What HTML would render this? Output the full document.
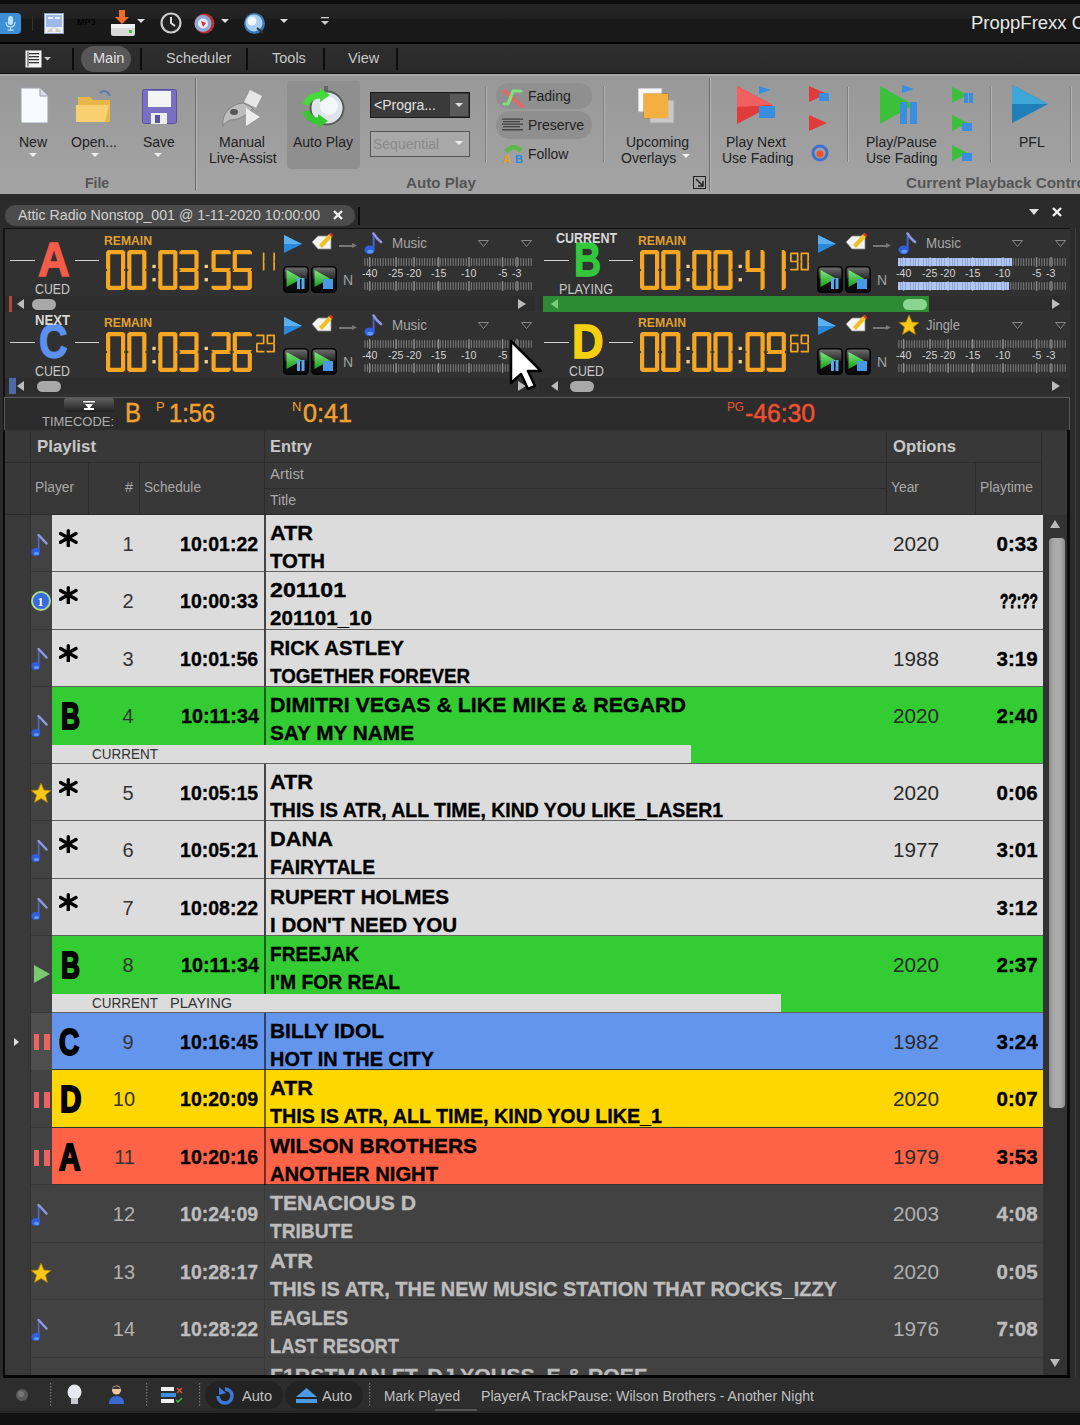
<!DOCTYPE html>
<html><head><meta charset="utf-8"><title>ProppFrexx</title><style>*{margin:0;padding:0;box-sizing:border-box}
html,body{width:1080px;height:1425px;overflow:hidden}
body{background:#2b2b2b;font-family:"Liberation Sans",sans-serif;position:relative}
.a{position:absolute;display:block}
.t{position:absolute;white-space:nowrap;line-height:1}
</style></head><body>
<svg width="0" height="0" style="position:absolute"><defs><linearGradient id="btng" x1="0" y1="0" x2="0" y2="1"><stop offset="0" stop-color="#707070"/><stop offset="0.45" stop-color="#2a2a2a"/><stop offset="0.5" stop-color="#111"/><stop offset="1" stop-color="#0a0a0a"/></linearGradient><linearGradient id="grng" x1="0" y1="0" x2="0" y2="1"><stop offset="0" stop-color="#7ee87e"/><stop offset="1" stop-color="#1a9a1a"/></linearGradient></defs></svg><div class="a" style="left:0px;top:0px;width:1080px;height:43px;background:linear-gradient(#0e0e0e 0,#0e0e0e 4px,#252525 4px,#222222 18px,#1a1a1a 19px,#191919 100%);"></div>
<div class="a" style="left:0px;top:41.5px;width:1080px;height:2px;background:#030303;"></div>
<div class="t" style="left:971.00px;top:14.0px;font-size:18.5px;color:#e8e8e8;">ProppFrexx O</div>
<div class="a" style="left:0px;top:13px;width:21px;height:21px;background:#3d8fd6;border-radius:0 4px 4px 0"></div>
<svg class="a" style="left:5px;top:16px;" width="11" height="15" viewBox="0 0 11 15"><rect x="3" y="0" width="5" height="9" rx="2.5" fill="#bfe0ff"/><path d="M1 6 Q1 11 5.5 11 Q10 11 10 6" stroke="#bfe0ff" stroke-width="1.2" fill="none"/><rect x="5" y="11" width="1.2" height="3" fill="#bfe0ff"/><rect x="2.5" y="13.5" width="6" height="1.2" fill="#bfe0ff"/></svg>
<div class="a" style="left:32px;top:16px;width:1px;height:15px;background:#333;"></div>
<svg class="a" style="left:44px;top:13px;" width="20" height="21" viewBox="0 0 20 21"><rect x="0.5" y="0.5" width="19" height="20" fill="#e8eef8" stroke="#8f9fbf"/><rect x="2" y="2" width="16" height="12" fill="#9fb8e8"/><rect x="4" y="4" width="5" height="2" fill="#eef"/><rect x="11" y="4" width="5" height="2" fill="#eef"/><path d="M3 19 Q10 10 17 19" fill="#c8d0c0"/><circle cx="10" cy="17" r="2" fill="#f0f0f0"/></svg>
<div class="t" style="left:77.00px;top:17.6px;font-size:9px;color:#050505;font-weight:bold;">MP3</div>
<svg class="a" style="left:110px;top:10px;" width="28" height="27" viewBox="0 0 28 27"><path d="M9 0 h6 v7 h4 l-7 7 l-7 -7 h4z" fill="#f06a2a"/><rect x="1" y="14" width="24" height="12" rx="2" fill="#d8d8d8"/><rect x="1" y="14" width="24" height="4" fill="#f0f0f0"/><rect x="19" y="20" width="3" height="3" fill="#3c3"/></svg>
<svg class="a" style="left:137px;top:19px;" width="8" height="5" viewBox="0 0 8 5"><path d="M0 0h8l-4 4z" fill="#ddd"/></svg>
<svg class="a" style="left:160px;top:12px;" width="22" height="22" viewBox="0 0 22 22"><circle cx="11" cy="11" r="9.5" fill="#222" stroke="#ccc" stroke-width="2.2"/><path d="M11 5v6l4 3" stroke="#ddd" stroke-width="2" fill="none"/></svg>
<svg class="a" style="left:193px;top:12px;" width="24" height="23" viewBox="0 0 24 23"><circle cx="11.5" cy="11.5" r="10" fill="#c03030"/><circle cx="10" cy="11.5" r="8.5" fill="#8fa8d8"/><circle cx="10" cy="11.5" r="5" fill="#e8eef8"/><path d="M8 9 l5 2 l-3 4z" fill="#c33"/></svg>
<svg class="a" style="left:221px;top:19px;" width="8" height="5" viewBox="0 0 8 5"><path d="M0 0h8l-4 4z" fill="#ddd"/></svg>
<svg class="a" style="left:243px;top:12px;" width="23" height="23" viewBox="0 0 23 23"><circle cx="11.5" cy="11.5" r="10.5" fill="#3a78b8"/><circle cx="11" cy="11" r="8.5" fill="#a8cff0"/><circle cx="9" cy="9" r="4.5" fill="#eef6ff"/><path d="M14 16 l6 5" stroke="#333" stroke-width="2"/></svg>
<svg class="a" style="left:280px;top:19px;" width="8" height="5" viewBox="0 0 8 5"><path d="M0 0h8l-4 4z" fill="#ddd"/></svg>
<svg class="a" style="left:321px;top:17px;" width="8" height="9" viewBox="0 0 8 9"><rect x="0" y="0" width="8" height="1.3" fill="#ccc"/><path d="M0 4h8l-4 4z" fill="#ccc"/></svg>
<div class="a" style="left:0px;top:43.5px;width:1080px;height:30px;background:linear-gradient(#2e2e2e,#2a2a2a);"></div>
<div class="a" style="left:0px;top:73px;width:1080px;height:1.2px;background:#0a0a0a;"></div>
<svg class="a" style="left:25px;top:50px;" width="17" height="18" viewBox="0 0 17 18"><rect x="0.5" y="0.5" width="16" height="17" fill="#f4f4f4"/><rect x="4" y="3" width="10" height="1.3" fill="#333"/><rect x="4" y="6" width="10" height="1.3" fill="#333"/><rect x="4" y="9" width="10" height="1.3" fill="#333"/><rect x="4" y="12" width="10" height="1.3" fill="#333"/><rect x="2.5" y="1.5" width="1" height="15" fill="#333"/></svg>
<svg class="a" style="left:44px;top:57px;" width="7" height="4" viewBox="0 0 7 4"><path d="M0 0h7l-3.5 3.5z" fill="#ccc"/></svg>
<div class="a" style="left:72px;top:48px;width:2px;height:22px;background:#0c0c0c;"></div>
<div class="a" style="left:140px;top:48px;width:2px;height:22px;background:#0c0c0c;"></div>
<div class="a" style="left:246px;top:48px;width:2px;height:22px;background:#0c0c0c;"></div>
<div class="a" style="left:323px;top:48px;width:2px;height:22px;background:#0c0c0c;"></div>
<div class="a" style="left:396px;top:48px;width:2px;height:22px;background:#0c0c0c;"></div>
<div class="a" style="left:81px;top:46px;width:50px;height:26px;background:#575757;border-radius:13px"></div>
<div class="t" style="left:93.00px;top:50.7px;font-size:14.5px;color:#e0e0e0;">Main</div>
<div class="t" style="left:166.00px;top:50.7px;font-size:14.5px;color:#c8c8c8;">Scheduler</div>
<div class="t" style="left:272.00px;top:50.7px;font-size:14.5px;color:#c8c8c8;">Tools</div>
<div class="t" style="left:348.00px;top:50.7px;font-size:14.5px;color:#c8c8c8;">View</div>
<div class="a" style="left:0px;top:74px;width:1080px;height:120px;background:linear-gradient(#aeaeae 0,#aeaeae 1px,#989898 2.5px,#9c9c9c 35%,#a4a4a4 100%);"></div>
<div class="a" style="left:0px;top:194px;width:1080px;height:4px;background:#2b2b2b;"></div>
<div class="a" style="left:195px;top:78px;width:1px;height:113px;background:#6e6e6e;box-shadow:1px 0 0 #b4b4b4"></div>
<div class="a" style="left:709px;top:78px;width:1px;height:113px;background:#6e6e6e;box-shadow:1px 0 0 #b4b4b4"></div>
<div class="a" style="left:485px;top:87px;width:1px;height:75px;background:#7e7e7e;box-shadow:1px 0 0 #b4b4b4"></div>
<div class="a" style="left:603px;top:87px;width:1px;height:75px;background:#7e7e7e;box-shadow:1px 0 0 #b4b4b4"></div>
<div class="a" style="left:847px;top:87px;width:1px;height:75px;background:#7e7e7e;box-shadow:1px 0 0 #b4b4b4"></div>
<div class="a" style="left:990px;top:87px;width:1px;height:75px;background:#7e7e7e;box-shadow:1px 0 0 #b4b4b4"></div>
<div class="a" style="left:1070px;top:87px;width:1px;height:75px;background:#7e7e7e;box-shadow:1px 0 0 #b4b4b4"></div>
<svg class="a" style="left:20px;top:87px;" width="29" height="37" viewBox="0 0 29 37"><path d="M1 1h19l8 8v27h-27z" fill="#f8f8ff" stroke="#9aa0b0"/><path d="M20 1v8h8" fill="#dde" stroke="#9aa0b0"/></svg>
<div class="t" style="left:19.00px;top:134.8px;font-size:14px;color:#222;">New</div>
<svg class="a" style="left:29px;top:153px;" width="8" height="5" viewBox="0 0 8 5"><path d="M0 0h8l-4 4z" fill="#eee"/></svg>
<svg class="a" style="left:76px;top:89px;" width="38" height="35" viewBox="0 0 38 35"><path d="M2 8h12l3 3h17v22h-32z" fill="#e6b84a"/><path d="M0 16h33l-4 17h-29z" fill="#f8d070"/><path d="M24 4 q6 -5 10 3" stroke="#5a7ab0" stroke-width="2" fill="none"/></svg>
<div class="t" style="left:71.00px;top:134.8px;font-size:14px;color:#222;">Open...</div>
<svg class="a" style="left:91px;top:153px;" width="8" height="5" viewBox="0 0 8 5"><path d="M0 0h8l-4 4z" fill="#eee"/></svg>
<svg class="a" style="left:142px;top:89px;" width="35" height="35" viewBox="0 0 35 35"><rect x="0.5" y="0.5" width="34" height="34" rx="2" fill="#7a6fc0" stroke="#5a50a0"/><rect x="6" y="2" width="23" height="16" fill="#f4f4f4"/><rect x="9" y="24" width="16" height="11" fill="#ececec"/><rect x="13" y="26" width="5" height="8" fill="#5a50a0"/></svg>
<div class="t" style="left:143.00px;top:134.8px;font-size:14px;color:#222;">Save</div>
<svg class="a" style="left:154px;top:153px;" width="8" height="5" viewBox="0 0 8 5"><path d="M0 0h8l-4 4z" fill="#eee"/></svg>
<div class="t" style="left:85.00px;top:175.8px;font-size:14px;color:#555;font-weight:bold;">File</div>
<svg class="a" style="left:220px;top:86px;" width="44" height="42" viewBox="0 0 44 42"><path d="M30 4 L42 10 L36 22 L24 16z" fill="#e6e6e6"/><path d="M23 17 L33 22 L28 27 Q20 34 10 34 Q5 36 3 40 Q2 30 8 24 Q14 18 23 17z" fill="#bdbdbd" stroke="#7a7a7a" stroke-width="0.8"/><ellipse cx="14" cy="26" rx="4" ry="3" fill="#555"/><path d="M26 22 L40 31 L26 40z" fill="#ececec"/></svg>
<div class="t" style="left:219.00px;top:134.8px;font-size:14px;color:#222;">Manual</div>
<div class="t" style="left:209.00px;top:150.8px;font-size:14px;color:#222;">Live-Assist</div>
<div class="a" style="left:287px;top:81px;width:73px;height:88px;background:#8f8f8f;border-radius:4px"></div>
<svg class="a" style="left:300px;top:84px;" width="46" height="46" viewBox="0 0 46 46"><rect x="24" y="2" width="4" height="5" fill="#666"/><circle cx="27" cy="24" r="16.5" fill="#dfe3ea" stroke="#5a5a5a" stroke-width="2"/><circle cx="29" cy="22" r="9" fill="#f4f6fa"/><path d="M6 21 Q9 11 22 11" stroke="#44d83a" stroke-width="6.5" fill="none"/><path d="M20 4 l10 7 l-10 7z" fill="#44d83a"/><path d="M6 27 Q9 37 20 37" stroke="#36c82e" stroke-width="6.5" fill="none"/><path d="M18 30 l10 7 l-10 7z" fill="#36c82e"/></svg>
<div class="t" style="left:293.00px;top:134.8px;font-size:14px;color:#222;">Auto Play</div>
<div class="a" style="left:370px;top:92px;width:100px;height:26px;background:#3a3a3a;border:1px solid #1a1a1a"></div>
<div class="a" style="left:450px;top:94px;width:18px;height:22px;background:#5a5a5a;"></div>
<svg class="a" style="left:455px;top:103px;" width="8" height="5" viewBox="0 0 8 5"><path d="M0 0h8l-4 4z" fill="#ddd"/></svg>
<div class="t" style="left:374.00px;top:97.8px;font-size:14px;color:#e0e0e0;">&lt;Progra...</div>
<div class="a" style="left:370px;top:131px;width:100px;height:26px;background:#a9a9a9;border:1px solid #555"></div>
<svg class="a" style="left:455px;top:141px;" width="8" height="5" viewBox="0 0 8 5"><path d="M0 0h8l-4 4z" fill="#eee"/></svg>
<div class="t" style="left:373.00px;top:136.8px;font-size:14px;color:#8a8a8a;">Sequential</div>
<div class="t" style="left:406.00px;top:175.8px;font-size:14px;color:#555;font-weight:bold;transform:scaleX(1.0836);transform-origin:left top;">Auto Play</div>
<div class="a" style="left:496px;top:83px;width:96px;height:26px;background:#8f8f8f;border-radius:13px"></div>
<div class="a" style="left:496px;top:111px;width:96px;height:28px;background:#8f8f8f;border-radius:14px"></div>
<svg class="a" style="left:501px;top:87px;" width="24" height="22" viewBox="0 0 24 22"><path d="M3 4 L21 19" stroke="#e06a6a" stroke-width="4" stroke-linecap="round"/><path d="M20 4 H12 L7 17 H3" stroke="#7ee07e" stroke-width="3.2" fill="none" stroke-linejoin="round" stroke-linecap="round"/></svg>
<div class="t" style="left:528.00px;top:88.8px;font-size:14px;color:#222;">Fading</div>
<svg class="a" style="left:502px;top:118px;" width="22" height="13" viewBox="0 0 22 13"><rect x="0" y="0.5" width="21" height="1.3" fill="#444"/><rect x="1" y="3" width="17" height="1.3" fill="#444"/><rect x="0" y="5.5" width="21" height="1.3" fill="#444"/><rect x="1" y="8" width="17" height="1.3" fill="#444"/><rect x="0" y="11" width="21" height="1.5" fill="#444"/></svg>
<div class="t" style="left:528.00px;top:117.8px;font-size:14px;color:#222;">Preserve</div>
<svg class="a" style="left:502px;top:142px;" width="23" height="23" viewBox="0 0 23 23"><path d="M4 10 Q11 1 19 9" stroke="#5cb84a" stroke-width="4.5" fill="none"/><text x="1" y="21" font-size="11" font-weight="bold" fill="#e8a020" font-family="Liberation Sans">A</text><text x="13" y="21" font-size="11" font-weight="bold" fill="#2a88d8" font-family="Liberation Sans">B</text></svg>
<div class="t" style="left:528.00px;top:146.8px;font-size:14px;color:#222;">Follow</div>
<svg class="a" style="left:638px;top:88px;" width="37" height="36" viewBox="0 0 37 36"><rect x="0" y="0" width="24" height="24" fill="#f8f8f8" stroke="#aaa"/><rect x="6" y="6" width="24" height="24" fill="#f0a838" stroke="#c07818"/><rect x="12" y="12" width="24" height="23" fill="#f6f6f6" stroke="#aaa" opacity="0.5"/><rect x="6" y="6" width="24" height="24" fill="#f3b040"/></svg>
<div class="t" style="left:626.00px;top:134.8px;font-size:14px;color:#222;">Upcoming</div>
<div class="t" style="left:621.00px;top:150.8px;font-size:14px;color:#222;">Overlays</div>
<svg class="a" style="left:682px;top:154px;" width="8" height="5" viewBox="0 0 8 5"><path d="M0 0h8l-4 4z" fill="#eee"/></svg>
<svg class="a" style="left:693px;top:176px;" width="13" height="13" viewBox="0 0 13 13"><rect x="0.5" y="0.5" width="12" height="12" fill="none" stroke="#222"/><path d="M3 3l7 7M10 5v5h-5" stroke="#222" stroke-width="1.5" fill="none"/></svg>
<svg class="a" style="left:737px;top:84px;" width="40" height="42" viewBox="0 0 40 42"><path d="M0 2 l36 19 l-36 19z" fill="#e03a3a"/><path d="M0 2 l36 19 l-36 2z" fill="#f06060"/><rect x="22" y="22" width="16" height="12" fill="#3a8ee0"/><path d="M22 2 l12 4 l-12 4z" fill="#3a8ee0"/></svg>
<div class="t" style="left:726.00px;top:134.8px;font-size:14px;color:#222;">Play Next</div>
<div class="t" style="left:722.00px;top:150.8px;font-size:14px;color:#222;">Use Fading</div>
<svg class="a" style="left:809px;top:85px;" width="22" height="17" viewBox="0 0 22 17"><path d="M0 1 l18 8 l-18 8z" fill="#e03a3a"/><rect x="10" y="8" width="10" height="8" fill="#3a8ee0"/></svg>
<svg class="a" style="left:809px;top:114px;" width="20" height="17" viewBox="0 0 20 17"><path d="M0 1 l18 8 l-18 8z" fill="#e03a3a"/></svg>
<svg class="a" style="left:811px;top:144px;" width="18" height="18" viewBox="0 0 18 18"><circle cx="9" cy="9" r="7" fill="none" stroke="#4070d0" stroke-width="3"/><circle cx="9" cy="10" r="3.5" fill="#f05030"/></svg>
<svg class="a" style="left:880px;top:84px;" width="40" height="42" viewBox="0 0 40 42"><path d="M0 2 l34 19 l-34 19z" fill="#3cc03c"/><rect x="20" y="18" width="7" height="22" fill="#3a8ee0"/><rect x="30" y="18" width="7" height="22" fill="#3a8ee0"/><path d="M22 1 l12 4 l-12 4z" fill="#3a8ee0"/></svg>
<div class="t" style="left:866.00px;top:134.8px;font-size:14px;color:#222;">Play/Pause</div>
<div class="t" style="left:866.00px;top:150.8px;font-size:14px;color:#222;">Use Fading</div>
<svg class="a" style="left:952px;top:86px;" width="22" height="18" viewBox="0 0 22 18"><path d="M0 1 l16 8 l-16 8z" fill="#3cc03c"/><rect x="12" y="7" width="4" height="10" fill="#3a8ee0"/><rect x="17" y="7" width="4" height="10" fill="#3a8ee0"/></svg>
<svg class="a" style="left:952px;top:114px;" width="22" height="18" viewBox="0 0 22 18"><path d="M0 1 l16 8 l-16 8z" fill="#3cc03c"/><rect x="10" y="9" width="10" height="8" fill="#3a8ee0"/></svg>
<svg class="a" style="left:952px;top:144px;" width="22" height="18" viewBox="0 0 22 18"><path d="M0 1 l16 8 l-16 8z" fill="#3cc03c"/><rect x="10" y="9" width="10" height="8" fill="#3a8ee0"/></svg>
<svg class="a" style="left:1010px;top:84px;" width="40" height="40" viewBox="0 0 40 40"><path d="M2 1 l36 19 l-36 19z" fill="#1f7fb8"/><path d="M2 1 l36 19 l-36 0z" fill="#3fa6d8"/></svg>
<div class="t" style="left:1019.00px;top:134.8px;font-size:14px;color:#222;">PFL</div>
<div class="t" style="left:906.00px;top:175.8px;font-size:14px;color:#555;font-weight:bold;transform:scaleX(1.0900);transform-origin:left top;">Current Playback Control</div>
<div class="a" style="left:0px;top:198px;width:1080px;height:30px;background:#2b2b2b;"></div>
<div class="a" style="left:5px;top:205px;width:350px;height:21px;background:#4b4b4b;border-radius:10px"></div>
<div class="t" style="left:18.00px;top:207.8px;font-size:14px;color:#d0d0d0;transform:scaleX(1.0134);transform-origin:left top;">Attic Radio Nonstop_001 @ 1-11-2020 10:00:00</div>
<svg class="a" style="left:332px;top:209px;" width="12" height="12" viewBox="0 0 12 12"><path d="M2 2l8 8M10 2l-8 8" stroke="#f0f0f0" stroke-width="2.4"/></svg>
<div class="a" style="left:358px;top:207px;width:2px;height:18px;background:#0c0c0c;"></div>
<svg class="a" style="left:1029px;top:209px;" width="10" height="7" viewBox="0 0 10 7"><path d="M0 0h10l-5 6z" fill="#e0e0e0"/></svg>
<svg class="a" style="left:1051px;top:206px;" width="12" height="12" viewBox="0 0 12 12"><path d="M2 2l8 8M10 2l-8 8" stroke="#f0f0f0" stroke-width="2.4"/></svg>
<div class="a" style="left:3px;top:228px;width:1067px;height:170px;background:#313131;"></div>
<div class="a" style="left:3px;top:228px;width:1067px;height:1px;background:#111;"></div>
<div class="a" style="left:3px;top:228px;width:2px;height:204px;background:#141414;"></div>
<div class="a" style="left:10px;top:259.5px;width:25px;height:1.3px;background:#d0d0d0;"></div>
<div class="a" style="left:75px;top:259.5px;width:24px;height:1.3px;background:#d0d0d0;"></div>
<div class="t" style="left:37.70px;top:234.9px;font-size:49px;color:#f25c48;font-weight:bold;transform:scaleX(0.8927);transform-origin:left top;-webkit-text-stroke:1.4px #f25c48;">A</div>
<div class="t" style="left:35.00px;top:281.7px;font-size:14.5px;color:#c8c8c8;transform:scaleX(0.8516);transform-origin:left top;">CUED</div>
<div class="t" style="left:104.00px;top:234.4px;font-size:13px;color:#e0a030;font-weight:bold;transform:scaleX(0.9357);transform-origin:left top;">REMAIN</div>
<svg class="a" style="left:105.5px;top:249.5px;" width="174" height="42" viewBox="0 0 174 42"><g fill="#f5a623"><path d="M0.00 0.00h19.20v4.20h-19.20zM15.00 0.00h4.20v22.10h-4.20zM15.00 17.90h4.20v22.10h-4.20zM0.00 35.80h19.20v4.20h-19.20zM0.00 17.90h4.20v22.10h-4.20zM0.00 0.00h4.20v22.10h-4.20z"/><path d="M-0.1 -0.1h2.2l-2.2 2.2z M19.3 -0.1v2.2l-2.2 -2.2z M-0.1 40.1v-2.2l2.2 2.2z M19.3 40.1h-2.2l2.2 -2.2zM-0.1 18.46l1.54 1.54l-1.54 1.54z M19.3 18.46l-1.54 1.54l1.54 1.54z" fill="#313131"/><path d="M21.20 0.00h19.20v4.20h-19.20zM36.20 0.00h4.20v22.10h-4.20zM36.20 17.90h4.20v22.10h-4.20zM21.20 35.80h19.20v4.20h-19.20zM21.20 17.90h4.20v22.10h-4.20zM21.20 0.00h4.20v22.10h-4.20z"/><path d="M21.099999999999998 -0.1h2.2l-2.2 2.2z M40.5 -0.1v2.2l-2.2 -2.2z M21.099999999999998 40.1v-2.2l2.2 2.2z M40.5 40.1h-2.2l2.2 -2.2zM21.099999999999998 18.46l1.54 1.54l-1.54 1.54z M40.5 18.46l-1.54 1.54l1.54 1.54z" fill="#313131"/><rect x="46.4" y="14.8" width="3.3" height="3.2" fill="#f2cf8a"/><rect x="46.4" y="28.0" width="3.3" height="3.4" fill="#f2cf8a"/><path d="M52.20 0.00h19.20v4.20h-19.20zM67.20 0.00h4.20v22.10h-4.20zM67.20 17.90h4.20v22.10h-4.20zM52.20 35.80h19.20v4.20h-19.20zM52.20 17.90h4.20v22.10h-4.20zM52.20 0.00h4.20v22.10h-4.20z"/><path d="M52.1 -0.1h2.2l-2.2 2.2z M71.5 -0.1v2.2l-2.2 -2.2z M52.1 40.1v-2.2l2.2 2.2z M71.5 40.1h-2.2l2.2 -2.2zM52.1 18.46l1.54 1.54l-1.54 1.54z M71.5 18.46l-1.54 1.54l1.54 1.54z" fill="#313131"/><path d="M73.40 0.00h19.20v4.20h-19.20zM88.40 0.00h4.20v22.10h-4.20zM73.40 17.90h19.20v4.20h-19.20zM88.40 17.90h4.20v22.10h-4.20zM73.40 35.80h19.20v4.20h-19.20z"/><path d="M73.30000000000001 -0.1h2.2l-2.2 2.2z M92.7 -0.1v2.2l-2.2 -2.2z M73.30000000000001 40.1v-2.2l2.2 2.2z M92.7 40.1h-2.2l2.2 -2.2zM73.30000000000001 18.46l1.54 1.54l-1.54 1.54z M92.7 18.46l-1.54 1.54l1.54 1.54z" fill="#313131"/><rect x="98.6" y="14.8" width="3.3" height="3.2" fill="#f2cf8a"/><rect x="98.6" y="28.0" width="3.3" height="3.4" fill="#f2cf8a"/><path d="M105.50 0.00h19.20v4.20h-19.20zM105.50 0.00h4.20v22.10h-4.20zM105.50 17.90h19.20v4.20h-19.20zM120.50 17.90h4.20v22.10h-4.20zM105.50 35.80h19.20v4.20h-19.20z"/><path d="M105.4 -0.1h2.2l-2.2 2.2z M124.8 -0.1v2.2l-2.2 -2.2z M105.4 40.1v-2.2l2.2 2.2z M124.8 40.1h-2.2l2.2 -2.2zM105.4 18.46l1.54 1.54l-1.54 1.54z M124.8 18.46l-1.54 1.54l1.54 1.54z" fill="#313131"/><path d="M126.70 0.00h19.20v4.20h-19.20zM126.70 0.00h4.20v22.10h-4.20zM126.70 17.90h19.20v4.20h-19.20zM141.70 17.90h4.20v22.10h-4.20zM126.70 35.80h19.20v4.20h-19.20z"/><path d="M126.60000000000001 -0.1h2.2l-2.2 2.2z M146.0 -0.1v2.2l-2.2 -2.2z M126.60000000000001 40.1v-2.2l2.2 2.2z M146.0 40.1h-2.2l2.2 -2.2zM126.60000000000001 18.46l1.54 1.54l-1.54 1.54z M146.0 18.46l-1.54 1.54l1.54 1.54z" fill="#313131"/><path d="M156.80 2.50h1.70v9.85h-1.70zM156.80 10.65h1.70v9.85h-1.70z"/><path d="M149.9 2.4h1l-1 1z M158.6 2.4v1l-1 -1z M149.9 20.6v-1l1 1z M158.6 20.6h-1l1 -1zM149.9 10.8l0.7 0.7l-0.7 0.7z M158.6 10.8l-0.7 0.7l0.7 0.7z" fill="#313131"/><path d="M167.30 2.50h1.70v9.85h-1.70zM167.30 10.65h1.70v9.85h-1.70z"/><path d="M160.4 2.4h1l-1 1z M169.1 2.4v1l-1 -1z M160.4 20.6v-1l1 1z M169.1 20.6h-1l1 -1zM160.4 10.8l0.7 0.7l-0.7 0.7z M169.1 10.8l-0.7 0.7l0.7 0.7z" fill="#313131"/></g></svg>
<svg class="a" style="left:284px;top:235px;" width="19" height="18" viewBox="0 0 19 18"><path d="M0 0 L18 9 L0 18z" fill="#2a88d8"/><path d="M0 0 L18 9 L0 9z" fill="#58b0f0"/></svg>
<svg class="a" style="left:311px;top:232px;" width="22" height="20" viewBox="0 0 22 20"><path d="M1 10 l6 -6 h13 v13 h-13z" fill="#f4f4f4" stroke="#888" stroke-width="0.8"/><path d="M8 13 l10 -11 l3 3 l-10 11z" fill="#f0c020"/><path d="M18 2 l3 3 l1.5 -1.5 l-3 -3z" fill="#e03030"/></svg>
<div class="a" style="left:339px;top:245px;width:14px;height:1.5px;background:#777;"></div>
<svg class="a" style="left:352px;top:243px;" width="5" height="5" viewBox="0 0 5 5"><path d="M0 0l5 2.5l-5 2.5z" fill="#777"/></svg>
<svg class="a" style="left:364px;top:232px;" width="19" height="23" viewBox="0 0 19 23"><path d="M9.6 1.5 V17" stroke="#4a60d0" stroke-width="2"/><path d="M9.6 1.5 Q12 6 17 10" stroke="#8f9ae0" stroke-width="2.6" fill="none" stroke-linecap="round"/><ellipse cx="5.6" cy="17.8" rx="5.2" ry="4.4" fill="#2f5fdc"/><ellipse cx="6.2" cy="19.5" rx="3" ry="1.8" fill="#5f9cf0"/></svg>
<div class="t" style="left:392.00px;top:235.1px;font-size:15px;color:#a8a8a8;transform:scaleX(0.8929);transform-origin:left top;">Music</div>
<svg class="a" style="left:478px;top:240px;" width="11" height="7" viewBox="0 0 11 7"><path d="M0.5 0.5h10l-5 6z" fill="none" stroke="#888"/></svg>
<svg class="a" style="left:521px;top:240px;" width="11" height="7" viewBox="0 0 11 7"><path d="M0.5 0.5h10l-5 6z" fill="none" stroke="#888"/></svg>
<svg class="a" style="left:364px;top:257px;" width="168" height="10" viewBox="0 0 168 10"><rect x="0.30" y="1.2" width="1.1" height="7.6" fill="#787878"/><rect x="2.90" y="1.2" width="1.1" height="7.6" fill="#787878"/><rect x="5.50" y="1.2" width="1.1" height="7.6" fill="#787878"/><rect x="8.10" y="1.2" width="1.1" height="7.6" fill="#787878"/><rect x="10.70" y="1.2" width="1.1" height="7.6" fill="#787878"/><rect x="13.30" y="1.2" width="1.1" height="7.6" fill="#787878"/><rect x="15.90" y="1.2" width="1.1" height="7.6" fill="#787878"/><rect x="18.50" y="1.2" width="1.1" height="7.6" fill="#787878"/><rect x="21.10" y="1.2" width="1.1" height="7.6" fill="#787878"/><rect x="23.70" y="1.2" width="1.1" height="7.6" fill="#787878"/><rect x="26.30" y="1.2" width="1.1" height="7.6" fill="#787878"/><rect x="28.90" y="1.2" width="1.1" height="7.6" fill="#787878"/><rect x="31.50" y="1.2" width="1.1" height="7.6" fill="#787878"/><rect x="34.10" y="1.2" width="1.1" height="7.6" fill="#787878"/><rect x="36.70" y="1.2" width="1.1" height="7.6" fill="#787878"/><rect x="39.30" y="1.2" width="1.1" height="7.6" fill="#787878"/><rect x="41.90" y="1.2" width="1.1" height="7.6" fill="#787878"/><rect x="44.50" y="1.2" width="1.1" height="7.6" fill="#787878"/><rect x="47.10" y="1.2" width="1.1" height="7.6" fill="#787878"/><rect x="49.70" y="1.2" width="1.1" height="7.6" fill="#787878"/><rect x="52.30" y="1.2" width="1.1" height="7.6" fill="#787878"/><rect x="54.90" y="1.2" width="1.1" height="7.6" fill="#787878"/><rect x="57.50" y="1.2" width="1.1" height="7.6" fill="#787878"/><rect x="60.10" y="1.2" width="1.1" height="7.6" fill="#787878"/><rect x="62.70" y="1.2" width="1.1" height="7.6" fill="#787878"/><rect x="65.30" y="1.2" width="1.1" height="7.6" fill="#787878"/><rect x="67.90" y="1.2" width="1.1" height="7.6" fill="#787878"/><rect x="70.50" y="1.2" width="1.1" height="7.6" fill="#787878"/><rect x="73.10" y="1.2" width="1.1" height="7.6" fill="#787878"/><rect x="75.70" y="1.2" width="1.1" height="7.6" fill="#787878"/><rect x="78.30" y="1.2" width="1.1" height="7.6" fill="#787878"/><rect x="80.90" y="1.2" width="1.1" height="7.6" fill="#787878"/><rect x="83.50" y="1.2" width="1.1" height="7.6" fill="#787878"/><rect x="86.10" y="1.2" width="1.1" height="7.6" fill="#787878"/><rect x="88.70" y="1.2" width="1.1" height="7.6" fill="#787878"/><rect x="91.30" y="1.2" width="1.1" height="7.6" fill="#787878"/><rect x="93.90" y="1.2" width="1.1" height="7.6" fill="#787878"/><rect x="96.50" y="1.2" width="1.1" height="7.6" fill="#787878"/><rect x="99.10" y="1.2" width="1.1" height="7.6" fill="#787878"/><rect x="101.70" y="1.2" width="1.1" height="7.6" fill="#787878"/><rect x="104.30" y="1.2" width="1.1" height="7.6" fill="#787878"/><rect x="106.90" y="1.2" width="1.1" height="7.6" fill="#787878"/><rect x="109.50" y="1.2" width="1.1" height="7.6" fill="#787878"/><rect x="112.10" y="1.2" width="1.1" height="7.6" fill="#787878"/><rect x="114.70" y="1.2" width="1.1" height="7.6" fill="#787878"/><rect x="117.30" y="1.2" width="1.1" height="7.6" fill="#787878"/><rect x="119.90" y="1.2" width="1.1" height="7.6" fill="#787878"/><rect x="122.50" y="1.2" width="1.1" height="7.6" fill="#787878"/><rect x="125.10" y="1.2" width="1.1" height="7.6" fill="#787878"/><rect x="127.70" y="1.2" width="1.1" height="7.6" fill="#787878"/><rect x="130.30" y="1.2" width="1.1" height="7.6" fill="#787878"/><rect x="132.90" y="1.2" width="1.1" height="7.6" fill="#787878"/><rect x="135.50" y="1.2" width="1.1" height="7.6" fill="#787878"/><rect x="138.10" y="1.2" width="1.1" height="7.6" fill="#787878"/><rect x="140.70" y="1.2" width="1.1" height="7.6" fill="#787878"/><rect x="143.30" y="1.2" width="1.1" height="7.6" fill="#787878"/><rect x="145.90" y="1.2" width="1.1" height="7.6" fill="#787878"/><rect x="148.50" y="1.2" width="1.1" height="7.6" fill="#787878"/><rect x="151.10" y="1.2" width="1.1" height="7.6" fill="#787878"/><rect x="153.70" y="1.2" width="1.1" height="7.6" fill="#787878"/><rect x="156.30" y="1.2" width="1.1" height="7.6" fill="#787878"/><rect x="158.90" y="1.2" width="1.1" height="7.6" fill="#787878"/><rect x="161.50" y="1.2" width="1.1" height="7.6" fill="#787878"/><rect x="164.10" y="1.2" width="1.1" height="7.6" fill="#787878"/><rect x="166.70" y="1.2" width="1.1" height="7.6" fill="#787878"/><rect x="4.90" y="0" width="1.3" height="10" fill="#8a8a8a"/><rect x="31.40" y="0" width="1.3" height="10" fill="#8a8a8a"/><rect x="49.40" y="0" width="1.3" height="10" fill="#8a8a8a"/><rect x="73.90" y="0" width="1.3" height="10" fill="#8a8a8a"/><rect x="104.40" y="0" width="1.3" height="10" fill="#8a8a8a"/><rect x="137.90" y="0" width="1.3" height="10" fill="#8a8a8a"/><rect x="152.40" y="0" width="1.3" height="10" fill="#8a8a8a"/></svg><svg class="a" style="left:364px;top:280.5px;" width="168" height="10" viewBox="0 0 168 10"><rect x="0.30" y="1.2" width="1.1" height="7.6" fill="#787878"/><rect x="2.90" y="1.2" width="1.1" height="7.6" fill="#787878"/><rect x="5.50" y="1.2" width="1.1" height="7.6" fill="#787878"/><rect x="8.10" y="1.2" width="1.1" height="7.6" fill="#787878"/><rect x="10.70" y="1.2" width="1.1" height="7.6" fill="#787878"/><rect x="13.30" y="1.2" width="1.1" height="7.6" fill="#787878"/><rect x="15.90" y="1.2" width="1.1" height="7.6" fill="#787878"/><rect x="18.50" y="1.2" width="1.1" height="7.6" fill="#787878"/><rect x="21.10" y="1.2" width="1.1" height="7.6" fill="#787878"/><rect x="23.70" y="1.2" width="1.1" height="7.6" fill="#787878"/><rect x="26.30" y="1.2" width="1.1" height="7.6" fill="#787878"/><rect x="28.90" y="1.2" width="1.1" height="7.6" fill="#787878"/><rect x="31.50" y="1.2" width="1.1" height="7.6" fill="#787878"/><rect x="34.10" y="1.2" width="1.1" height="7.6" fill="#787878"/><rect x="36.70" y="1.2" width="1.1" height="7.6" fill="#787878"/><rect x="39.30" y="1.2" width="1.1" height="7.6" fill="#787878"/><rect x="41.90" y="1.2" width="1.1" height="7.6" fill="#787878"/><rect x="44.50" y="1.2" width="1.1" height="7.6" fill="#787878"/><rect x="47.10" y="1.2" width="1.1" height="7.6" fill="#787878"/><rect x="49.70" y="1.2" width="1.1" height="7.6" fill="#787878"/><rect x="52.30" y="1.2" width="1.1" height="7.6" fill="#787878"/><rect x="54.90" y="1.2" width="1.1" height="7.6" fill="#787878"/><rect x="57.50" y="1.2" width="1.1" height="7.6" fill="#787878"/><rect x="60.10" y="1.2" width="1.1" height="7.6" fill="#787878"/><rect x="62.70" y="1.2" width="1.1" height="7.6" fill="#787878"/><rect x="65.30" y="1.2" width="1.1" height="7.6" fill="#787878"/><rect x="67.90" y="1.2" width="1.1" height="7.6" fill="#787878"/><rect x="70.50" y="1.2" width="1.1" height="7.6" fill="#787878"/><rect x="73.10" y="1.2" width="1.1" height="7.6" fill="#787878"/><rect x="75.70" y="1.2" width="1.1" height="7.6" fill="#787878"/><rect x="78.30" y="1.2" width="1.1" height="7.6" fill="#787878"/><rect x="80.90" y="1.2" width="1.1" height="7.6" fill="#787878"/><rect x="83.50" y="1.2" width="1.1" height="7.6" fill="#787878"/><rect x="86.10" y="1.2" width="1.1" height="7.6" fill="#787878"/><rect x="88.70" y="1.2" width="1.1" height="7.6" fill="#787878"/><rect x="91.30" y="1.2" width="1.1" height="7.6" fill="#787878"/><rect x="93.90" y="1.2" width="1.1" height="7.6" fill="#787878"/><rect x="96.50" y="1.2" width="1.1" height="7.6" fill="#787878"/><rect x="99.10" y="1.2" width="1.1" height="7.6" fill="#787878"/><rect x="101.70" y="1.2" width="1.1" height="7.6" fill="#787878"/><rect x="104.30" y="1.2" width="1.1" height="7.6" fill="#787878"/><rect x="106.90" y="1.2" width="1.1" height="7.6" fill="#787878"/><rect x="109.50" y="1.2" width="1.1" height="7.6" fill="#787878"/><rect x="112.10" y="1.2" width="1.1" height="7.6" fill="#787878"/><rect x="114.70" y="1.2" width="1.1" height="7.6" fill="#787878"/><rect x="117.30" y="1.2" width="1.1" height="7.6" fill="#787878"/><rect x="119.90" y="1.2" width="1.1" height="7.6" fill="#787878"/><rect x="122.50" y="1.2" width="1.1" height="7.6" fill="#787878"/><rect x="125.10" y="1.2" width="1.1" height="7.6" fill="#787878"/><rect x="127.70" y="1.2" width="1.1" height="7.6" fill="#787878"/><rect x="130.30" y="1.2" width="1.1" height="7.6" fill="#787878"/><rect x="132.90" y="1.2" width="1.1" height="7.6" fill="#787878"/><rect x="135.50" y="1.2" width="1.1" height="7.6" fill="#787878"/><rect x="138.10" y="1.2" width="1.1" height="7.6" fill="#787878"/><rect x="140.70" y="1.2" width="1.1" height="7.6" fill="#787878"/><rect x="143.30" y="1.2" width="1.1" height="7.6" fill="#787878"/><rect x="145.90" y="1.2" width="1.1" height="7.6" fill="#787878"/><rect x="148.50" y="1.2" width="1.1" height="7.6" fill="#787878"/><rect x="151.10" y="1.2" width="1.1" height="7.6" fill="#787878"/><rect x="153.70" y="1.2" width="1.1" height="7.6" fill="#787878"/><rect x="156.30" y="1.2" width="1.1" height="7.6" fill="#787878"/><rect x="158.90" y="1.2" width="1.1" height="7.6" fill="#787878"/><rect x="161.50" y="1.2" width="1.1" height="7.6" fill="#787878"/><rect x="164.10" y="1.2" width="1.1" height="7.6" fill="#787878"/><rect x="166.70" y="1.2" width="1.1" height="7.6" fill="#787878"/><rect x="4.90" y="0" width="1.3" height="10" fill="#8a8a8a"/><rect x="31.40" y="0" width="1.3" height="10" fill="#8a8a8a"/><rect x="49.40" y="0" width="1.3" height="10" fill="#8a8a8a"/><rect x="73.90" y="0" width="1.3" height="10" fill="#8a8a8a"/><rect x="104.40" y="0" width="1.3" height="10" fill="#8a8a8a"/><rect x="137.90" y="0" width="1.3" height="10" fill="#8a8a8a"/><rect x="152.40" y="0" width="1.3" height="10" fill="#8a8a8a"/></svg><div class="t" style="left:361.85px;top:267.7px;font-size:11.5px;color:#d4d4d4;transform:scaleX(0.9211);transform-origin:left top;">-40</div><div class="t" style="left:388.35px;top:267.7px;font-size:11.5px;color:#d4d4d4;transform:scaleX(0.9211);transform-origin:left top;">-25</div><div class="t" style="left:406.35px;top:267.7px;font-size:11.5px;color:#d4d4d4;transform:scaleX(0.9211);transform-origin:left top;">-20</div><div class="t" style="left:430.85px;top:267.7px;font-size:11.5px;color:#d4d4d4;transform:scaleX(0.9211);transform-origin:left top;">-15</div><div class="t" style="left:461.35px;top:267.7px;font-size:11.5px;color:#d4d4d4;transform:scaleX(0.9211);transform-origin:left top;">-10</div><div class="t" style="left:497.80px;top:267.7px;font-size:11.5px;color:#d4d4d4;transform:scaleX(0.9223);transform-origin:left top;">-5</div><div class="t" style="left:512.30px;top:267.7px;font-size:11.5px;color:#d4d4d4;transform:scaleX(0.9223);transform-origin:left top;">-3</div>
<svg class="a" style="left:283px;top:266px;" width="26" height="27" viewBox="0 0 26 27"><rect x="0.8" y="0.8" width="24.4" height="25.4" rx="3.5" fill="url(#btng)" stroke="#050505" stroke-width="1.6"/><path d="M3.5 4 L19 12.5 L3.5 21z" fill="url(#grng)"/><rect x="14" y="12" width="3" height="11" fill="#5aa8f0"/><rect x="18.5" y="12" width="3" height="11" fill="#5aa8f0"/></svg>
<svg class="a" style="left:311px;top:266px;" width="26" height="27" viewBox="0 0 26 27"><rect x="0.8" y="0.8" width="24.4" height="25.4" rx="3.5" fill="url(#btng)" stroke="#050505" stroke-width="1.6"/><path d="M3.5 4 L19 12.5 L3.5 21z" fill="url(#grng)"/><rect x="12" y="13" width="10" height="10" fill="#4a98e8"/></svg>
<div class="t" style="left:343.00px;top:273.3px;font-size:14px;color:#a0a0a0;">N</div>
<div class="a" style="left:5px;top:296px;width:530px;height:15px;background:#2d2d2d;"></div>
<div class="a" style="left:9px;top:296px;width:3px;height:16px;background:#b04a40;"></div>
<svg class="a" style="left:17px;top:299px;" width="8" height="10" viewBox="0 0 8 10"><path d="M7 0 L0 5 L7 10z" fill="#bbb"/></svg>
<div class="a" style="left:32px;top:299px;width:24px;height:11px;background:#a8a8a8;border-radius:6px"></div>
<svg class="a" style="left:518px;top:299px;" width="8" height="10" viewBox="0 0 8 10"><path d="M0 0 L8 5 L0 10z" fill="#bbb"/></svg>
<div class="a" style="left:10px;top:341.5px;width:25px;height:1.3px;background:#d0d0d0;"></div>
<div class="a" style="left:75px;top:341.5px;width:24px;height:1.3px;background:#d0d0d0;"></div>
<div class="t" style="left:38.70px;top:316.9px;font-size:49px;color:#5a90ee;font-weight:bold;transform:scaleX(0.8079);transform-origin:left top;-webkit-text-stroke:1.4px #5a90ee;">C</div>
<div class="t" style="left:35.00px;top:313.3px;font-size:14px;color:#d8d8d8;font-weight:bold;transform:scaleX(0.9383);transform-origin:left top;">NEXT</div>
<div class="t" style="left:35.00px;top:363.7px;font-size:14.5px;color:#c8c8c8;transform:scaleX(0.8516);transform-origin:left top;">CUED</div>
<div class="t" style="left:104.00px;top:316.4px;font-size:13px;color:#e0a030;font-weight:bold;transform:scaleX(0.9357);transform-origin:left top;">REMAIN</div>
<svg class="a" style="left:105.5px;top:331.5px;" width="174" height="42" viewBox="0 0 174 42"><g fill="#f5a623"><path d="M0.00 0.00h19.20v4.20h-19.20zM15.00 0.00h4.20v22.10h-4.20zM15.00 17.90h4.20v22.10h-4.20zM0.00 35.80h19.20v4.20h-19.20zM0.00 17.90h4.20v22.10h-4.20zM0.00 0.00h4.20v22.10h-4.20z"/><path d="M-0.1 -0.1h2.2l-2.2 2.2z M19.3 -0.1v2.2l-2.2 -2.2z M-0.1 40.1v-2.2l2.2 2.2z M19.3 40.1h-2.2l2.2 -2.2zM-0.1 18.46l1.54 1.54l-1.54 1.54z M19.3 18.46l-1.54 1.54l1.54 1.54z" fill="#313131"/><path d="M21.20 0.00h19.20v4.20h-19.20zM36.20 0.00h4.20v22.10h-4.20zM36.20 17.90h4.20v22.10h-4.20zM21.20 35.80h19.20v4.20h-19.20zM21.20 17.90h4.20v22.10h-4.20zM21.20 0.00h4.20v22.10h-4.20z"/><path d="M21.099999999999998 -0.1h2.2l-2.2 2.2z M40.5 -0.1v2.2l-2.2 -2.2z M21.099999999999998 40.1v-2.2l2.2 2.2z M40.5 40.1h-2.2l2.2 -2.2zM21.099999999999998 18.46l1.54 1.54l-1.54 1.54z M40.5 18.46l-1.54 1.54l1.54 1.54z" fill="#313131"/><rect x="46.4" y="14.8" width="3.3" height="3.2" fill="#f2cf8a"/><rect x="46.4" y="28.0" width="3.3" height="3.4" fill="#f2cf8a"/><path d="M52.20 0.00h19.20v4.20h-19.20zM67.20 0.00h4.20v22.10h-4.20zM67.20 17.90h4.20v22.10h-4.20zM52.20 35.80h19.20v4.20h-19.20zM52.20 17.90h4.20v22.10h-4.20zM52.20 0.00h4.20v22.10h-4.20z"/><path d="M52.1 -0.1h2.2l-2.2 2.2z M71.5 -0.1v2.2l-2.2 -2.2z M52.1 40.1v-2.2l2.2 2.2z M71.5 40.1h-2.2l2.2 -2.2zM52.1 18.46l1.54 1.54l-1.54 1.54z M71.5 18.46l-1.54 1.54l1.54 1.54z" fill="#313131"/><path d="M73.40 0.00h19.20v4.20h-19.20zM88.40 0.00h4.20v22.10h-4.20zM73.40 17.90h19.20v4.20h-19.20zM88.40 17.90h4.20v22.10h-4.20zM73.40 35.80h19.20v4.20h-19.20z"/><path d="M73.30000000000001 -0.1h2.2l-2.2 2.2z M92.7 -0.1v2.2l-2.2 -2.2z M73.30000000000001 40.1v-2.2l2.2 2.2z M92.7 40.1h-2.2l2.2 -2.2zM73.30000000000001 18.46l1.54 1.54l-1.54 1.54z M92.7 18.46l-1.54 1.54l1.54 1.54z" fill="#313131"/><rect x="98.6" y="14.8" width="3.3" height="3.2" fill="#f2cf8a"/><rect x="98.6" y="28.0" width="3.3" height="3.4" fill="#f2cf8a"/><path d="M105.50 0.00h19.20v4.20h-19.20zM120.50 0.00h4.20v22.10h-4.20zM105.50 17.90h19.20v4.20h-19.20zM105.50 17.90h4.20v22.10h-4.20zM105.50 35.80h19.20v4.20h-19.20z"/><path d="M105.4 -0.1h2.2l-2.2 2.2z M124.8 -0.1v2.2l-2.2 -2.2z M105.4 40.1v-2.2l2.2 2.2z M124.8 40.1h-2.2l2.2 -2.2zM105.4 18.46l1.54 1.54l-1.54 1.54z M124.8 18.46l-1.54 1.54l1.54 1.54z" fill="#313131"/><path d="M126.70 0.00h19.20v4.20h-19.20zM126.70 0.00h4.20v22.10h-4.20zM126.70 17.90h19.20v4.20h-19.20zM126.70 17.90h4.20v22.10h-4.20zM126.70 35.80h19.20v4.20h-19.20zM141.70 17.90h4.20v22.10h-4.20z"/><path d="M126.60000000000001 -0.1h2.2l-2.2 2.2z M146.0 -0.1v2.2l-2.2 -2.2z M126.60000000000001 40.1v-2.2l2.2 2.2z M146.0 40.1h-2.2l2.2 -2.2zM126.60000000000001 18.46l1.54 1.54l-1.54 1.54z M146.0 18.46l-1.54 1.54l1.54 1.54z" fill="#313131"/><path d="M150.00 2.50h8.50v1.70h-8.50zM156.80 2.50h1.70v9.85h-1.70zM150.00 10.65h8.50v1.70h-8.50zM150.00 10.65h1.70v9.85h-1.70zM150.00 18.80h8.50v1.70h-8.50z"/><path d="M149.9 2.4h1l-1 1z M158.6 2.4v1l-1 -1z M149.9 20.6v-1l1 1z M158.6 20.6h-1l1 -1zM149.9 10.8l0.7 0.7l-0.7 0.7z M158.6 10.8l-0.7 0.7l0.7 0.7z" fill="#313131"/><path d="M160.50 2.50h8.50v1.70h-8.50zM167.30 2.50h1.70v9.85h-1.70zM167.30 10.65h1.70v9.85h-1.70zM160.50 18.80h8.50v1.70h-8.50zM160.50 2.50h1.70v9.85h-1.70zM160.50 10.65h8.50v1.70h-8.50z"/><path d="M160.4 2.4h1l-1 1z M169.1 2.4v1l-1 -1z M160.4 20.6v-1l1 1z M169.1 20.6h-1l1 -1zM160.4 10.8l0.7 0.7l-0.7 0.7z M169.1 10.8l-0.7 0.7l0.7 0.7z" fill="#313131"/></g></svg>
<svg class="a" style="left:284px;top:317px;" width="19" height="18" viewBox="0 0 19 18"><path d="M0 0 L18 9 L0 18z" fill="#2a88d8"/><path d="M0 0 L18 9 L0 9z" fill="#58b0f0"/></svg>
<svg class="a" style="left:311px;top:314px;" width="22" height="20" viewBox="0 0 22 20"><path d="M1 10 l6 -6 h13 v13 h-13z" fill="#f4f4f4" stroke="#888" stroke-width="0.8"/><path d="M8 13 l10 -11 l3 3 l-10 11z" fill="#f0c020"/><path d="M18 2 l3 3 l1.5 -1.5 l-3 -3z" fill="#e03030"/></svg>
<div class="a" style="left:339px;top:327px;width:14px;height:1.5px;background:#777;"></div>
<svg class="a" style="left:352px;top:325px;" width="5" height="5" viewBox="0 0 5 5"><path d="M0 0l5 2.5l-5 2.5z" fill="#777"/></svg>
<svg class="a" style="left:364px;top:314px;" width="19" height="23" viewBox="0 0 19 23"><path d="M9.6 1.5 V17" stroke="#4a60d0" stroke-width="2"/><path d="M9.6 1.5 Q12 6 17 10" stroke="#8f9ae0" stroke-width="2.6" fill="none" stroke-linecap="round"/><ellipse cx="5.6" cy="17.8" rx="5.2" ry="4.4" fill="#2f5fdc"/><ellipse cx="6.2" cy="19.5" rx="3" ry="1.8" fill="#5f9cf0"/></svg>
<div class="t" style="left:392.00px;top:317.1px;font-size:15px;color:#a8a8a8;transform:scaleX(0.8929);transform-origin:left top;">Music</div>
<svg class="a" style="left:478px;top:322px;" width="11" height="7" viewBox="0 0 11 7"><path d="M0.5 0.5h10l-5 6z" fill="none" stroke="#888"/></svg>
<svg class="a" style="left:521px;top:322px;" width="11" height="7" viewBox="0 0 11 7"><path d="M0.5 0.5h10l-5 6z" fill="none" stroke="#888"/></svg>
<svg class="a" style="left:364px;top:339px;" width="168" height="10" viewBox="0 0 168 10"><rect x="0.30" y="1.2" width="1.1" height="7.6" fill="#787878"/><rect x="2.90" y="1.2" width="1.1" height="7.6" fill="#787878"/><rect x="5.50" y="1.2" width="1.1" height="7.6" fill="#787878"/><rect x="8.10" y="1.2" width="1.1" height="7.6" fill="#787878"/><rect x="10.70" y="1.2" width="1.1" height="7.6" fill="#787878"/><rect x="13.30" y="1.2" width="1.1" height="7.6" fill="#787878"/><rect x="15.90" y="1.2" width="1.1" height="7.6" fill="#787878"/><rect x="18.50" y="1.2" width="1.1" height="7.6" fill="#787878"/><rect x="21.10" y="1.2" width="1.1" height="7.6" fill="#787878"/><rect x="23.70" y="1.2" width="1.1" height="7.6" fill="#787878"/><rect x="26.30" y="1.2" width="1.1" height="7.6" fill="#787878"/><rect x="28.90" y="1.2" width="1.1" height="7.6" fill="#787878"/><rect x="31.50" y="1.2" width="1.1" height="7.6" fill="#787878"/><rect x="34.10" y="1.2" width="1.1" height="7.6" fill="#787878"/><rect x="36.70" y="1.2" width="1.1" height="7.6" fill="#787878"/><rect x="39.30" y="1.2" width="1.1" height="7.6" fill="#787878"/><rect x="41.90" y="1.2" width="1.1" height="7.6" fill="#787878"/><rect x="44.50" y="1.2" width="1.1" height="7.6" fill="#787878"/><rect x="47.10" y="1.2" width="1.1" height="7.6" fill="#787878"/><rect x="49.70" y="1.2" width="1.1" height="7.6" fill="#787878"/><rect x="52.30" y="1.2" width="1.1" height="7.6" fill="#787878"/><rect x="54.90" y="1.2" width="1.1" height="7.6" fill="#787878"/><rect x="57.50" y="1.2" width="1.1" height="7.6" fill="#787878"/><rect x="60.10" y="1.2" width="1.1" height="7.6" fill="#787878"/><rect x="62.70" y="1.2" width="1.1" height="7.6" fill="#787878"/><rect x="65.30" y="1.2" width="1.1" height="7.6" fill="#787878"/><rect x="67.90" y="1.2" width="1.1" height="7.6" fill="#787878"/><rect x="70.50" y="1.2" width="1.1" height="7.6" fill="#787878"/><rect x="73.10" y="1.2" width="1.1" height="7.6" fill="#787878"/><rect x="75.70" y="1.2" width="1.1" height="7.6" fill="#787878"/><rect x="78.30" y="1.2" width="1.1" height="7.6" fill="#787878"/><rect x="80.90" y="1.2" width="1.1" height="7.6" fill="#787878"/><rect x="83.50" y="1.2" width="1.1" height="7.6" fill="#787878"/><rect x="86.10" y="1.2" width="1.1" height="7.6" fill="#787878"/><rect x="88.70" y="1.2" width="1.1" height="7.6" fill="#787878"/><rect x="91.30" y="1.2" width="1.1" height="7.6" fill="#787878"/><rect x="93.90" y="1.2" width="1.1" height="7.6" fill="#787878"/><rect x="96.50" y="1.2" width="1.1" height="7.6" fill="#787878"/><rect x="99.10" y="1.2" width="1.1" height="7.6" fill="#787878"/><rect x="101.70" y="1.2" width="1.1" height="7.6" fill="#787878"/><rect x="104.30" y="1.2" width="1.1" height="7.6" fill="#787878"/><rect x="106.90" y="1.2" width="1.1" height="7.6" fill="#787878"/><rect x="109.50" y="1.2" width="1.1" height="7.6" fill="#787878"/><rect x="112.10" y="1.2" width="1.1" height="7.6" fill="#787878"/><rect x="114.70" y="1.2" width="1.1" height="7.6" fill="#787878"/><rect x="117.30" y="1.2" width="1.1" height="7.6" fill="#787878"/><rect x="119.90" y="1.2" width="1.1" height="7.6" fill="#787878"/><rect x="122.50" y="1.2" width="1.1" height="7.6" fill="#787878"/><rect x="125.10" y="1.2" width="1.1" height="7.6" fill="#787878"/><rect x="127.70" y="1.2" width="1.1" height="7.6" fill="#787878"/><rect x="130.30" y="1.2" width="1.1" height="7.6" fill="#787878"/><rect x="132.90" y="1.2" width="1.1" height="7.6" fill="#787878"/><rect x="135.50" y="1.2" width="1.1" height="7.6" fill="#787878"/><rect x="138.10" y="1.2" width="1.1" height="7.6" fill="#787878"/><rect x="140.70" y="1.2" width="1.1" height="7.6" fill="#787878"/><rect x="143.30" y="1.2" width="1.1" height="7.6" fill="#787878"/><rect x="145.90" y="1.2" width="1.1" height="7.6" fill="#787878"/><rect x="148.50" y="1.2" width="1.1" height="7.6" fill="#787878"/><rect x="151.10" y="1.2" width="1.1" height="7.6" fill="#787878"/><rect x="153.70" y="1.2" width="1.1" height="7.6" fill="#787878"/><rect x="156.30" y="1.2" width="1.1" height="7.6" fill="#787878"/><rect x="158.90" y="1.2" width="1.1" height="7.6" fill="#787878"/><rect x="161.50" y="1.2" width="1.1" height="7.6" fill="#787878"/><rect x="164.10" y="1.2" width="1.1" height="7.6" fill="#787878"/><rect x="166.70" y="1.2" width="1.1" height="7.6" fill="#787878"/><rect x="4.90" y="0" width="1.3" height="10" fill="#8a8a8a"/><rect x="31.40" y="0" width="1.3" height="10" fill="#8a8a8a"/><rect x="49.40" y="0" width="1.3" height="10" fill="#8a8a8a"/><rect x="73.90" y="0" width="1.3" height="10" fill="#8a8a8a"/><rect x="104.40" y="0" width="1.3" height="10" fill="#8a8a8a"/><rect x="137.90" y="0" width="1.3" height="10" fill="#8a8a8a"/><rect x="152.40" y="0" width="1.3" height="10" fill="#8a8a8a"/></svg><svg class="a" style="left:364px;top:362.5px;" width="168" height="10" viewBox="0 0 168 10"><rect x="0.30" y="1.2" width="1.1" height="7.6" fill="#787878"/><rect x="2.90" y="1.2" width="1.1" height="7.6" fill="#787878"/><rect x="5.50" y="1.2" width="1.1" height="7.6" fill="#787878"/><rect x="8.10" y="1.2" width="1.1" height="7.6" fill="#787878"/><rect x="10.70" y="1.2" width="1.1" height="7.6" fill="#787878"/><rect x="13.30" y="1.2" width="1.1" height="7.6" fill="#787878"/><rect x="15.90" y="1.2" width="1.1" height="7.6" fill="#787878"/><rect x="18.50" y="1.2" width="1.1" height="7.6" fill="#787878"/><rect x="21.10" y="1.2" width="1.1" height="7.6" fill="#787878"/><rect x="23.70" y="1.2" width="1.1" height="7.6" fill="#787878"/><rect x="26.30" y="1.2" width="1.1" height="7.6" fill="#787878"/><rect x="28.90" y="1.2" width="1.1" height="7.6" fill="#787878"/><rect x="31.50" y="1.2" width="1.1" height="7.6" fill="#787878"/><rect x="34.10" y="1.2" width="1.1" height="7.6" fill="#787878"/><rect x="36.70" y="1.2" width="1.1" height="7.6" fill="#787878"/><rect x="39.30" y="1.2" width="1.1" height="7.6" fill="#787878"/><rect x="41.90" y="1.2" width="1.1" height="7.6" fill="#787878"/><rect x="44.50" y="1.2" width="1.1" height="7.6" fill="#787878"/><rect x="47.10" y="1.2" width="1.1" height="7.6" fill="#787878"/><rect x="49.70" y="1.2" width="1.1" height="7.6" fill="#787878"/><rect x="52.30" y="1.2" width="1.1" height="7.6" fill="#787878"/><rect x="54.90" y="1.2" width="1.1" height="7.6" fill="#787878"/><rect x="57.50" y="1.2" width="1.1" height="7.6" fill="#787878"/><rect x="60.10" y="1.2" width="1.1" height="7.6" fill="#787878"/><rect x="62.70" y="1.2" width="1.1" height="7.6" fill="#787878"/><rect x="65.30" y="1.2" width="1.1" height="7.6" fill="#787878"/><rect x="67.90" y="1.2" width="1.1" height="7.6" fill="#787878"/><rect x="70.50" y="1.2" width="1.1" height="7.6" fill="#787878"/><rect x="73.10" y="1.2" width="1.1" height="7.6" fill="#787878"/><rect x="75.70" y="1.2" width="1.1" height="7.6" fill="#787878"/><rect x="78.30" y="1.2" width="1.1" height="7.6" fill="#787878"/><rect x="80.90" y="1.2" width="1.1" height="7.6" fill="#787878"/><rect x="83.50" y="1.2" width="1.1" height="7.6" fill="#787878"/><rect x="86.10" y="1.2" width="1.1" height="7.6" fill="#787878"/><rect x="88.70" y="1.2" width="1.1" height="7.6" fill="#787878"/><rect x="91.30" y="1.2" width="1.1" height="7.6" fill="#787878"/><rect x="93.90" y="1.2" width="1.1" height="7.6" fill="#787878"/><rect x="96.50" y="1.2" width="1.1" height="7.6" fill="#787878"/><rect x="99.10" y="1.2" width="1.1" height="7.6" fill="#787878"/><rect x="101.70" y="1.2" width="1.1" height="7.6" fill="#787878"/><rect x="104.30" y="1.2" width="1.1" height="7.6" fill="#787878"/><rect x="106.90" y="1.2" width="1.1" height="7.6" fill="#787878"/><rect x="109.50" y="1.2" width="1.1" height="7.6" fill="#787878"/><rect x="112.10" y="1.2" width="1.1" height="7.6" fill="#787878"/><rect x="114.70" y="1.2" width="1.1" height="7.6" fill="#787878"/><rect x="117.30" y="1.2" width="1.1" height="7.6" fill="#787878"/><rect x="119.90" y="1.2" width="1.1" height="7.6" fill="#787878"/><rect x="122.50" y="1.2" width="1.1" height="7.6" fill="#787878"/><rect x="125.10" y="1.2" width="1.1" height="7.6" fill="#787878"/><rect x="127.70" y="1.2" width="1.1" height="7.6" fill="#787878"/><rect x="130.30" y="1.2" width="1.1" height="7.6" fill="#787878"/><rect x="132.90" y="1.2" width="1.1" height="7.6" fill="#787878"/><rect x="135.50" y="1.2" width="1.1" height="7.6" fill="#787878"/><rect x="138.10" y="1.2" width="1.1" height="7.6" fill="#787878"/><rect x="140.70" y="1.2" width="1.1" height="7.6" fill="#787878"/><rect x="143.30" y="1.2" width="1.1" height="7.6" fill="#787878"/><rect x="145.90" y="1.2" width="1.1" height="7.6" fill="#787878"/><rect x="148.50" y="1.2" width="1.1" height="7.6" fill="#787878"/><rect x="151.10" y="1.2" width="1.1" height="7.6" fill="#787878"/><rect x="153.70" y="1.2" width="1.1" height="7.6" fill="#787878"/><rect x="156.30" y="1.2" width="1.1" height="7.6" fill="#787878"/><rect x="158.90" y="1.2" width="1.1" height="7.6" fill="#787878"/><rect x="161.50" y="1.2" width="1.1" height="7.6" fill="#787878"/><rect x="164.10" y="1.2" width="1.1" height="7.6" fill="#787878"/><rect x="166.70" y="1.2" width="1.1" height="7.6" fill="#787878"/><rect x="4.90" y="0" width="1.3" height="10" fill="#8a8a8a"/><rect x="31.40" y="0" width="1.3" height="10" fill="#8a8a8a"/><rect x="49.40" y="0" width="1.3" height="10" fill="#8a8a8a"/><rect x="73.90" y="0" width="1.3" height="10" fill="#8a8a8a"/><rect x="104.40" y="0" width="1.3" height="10" fill="#8a8a8a"/><rect x="137.90" y="0" width="1.3" height="10" fill="#8a8a8a"/><rect x="152.40" y="0" width="1.3" height="10" fill="#8a8a8a"/></svg><div class="t" style="left:361.85px;top:349.7px;font-size:11.5px;color:#d4d4d4;transform:scaleX(0.9211);transform-origin:left top;">-40</div><div class="t" style="left:388.35px;top:349.7px;font-size:11.5px;color:#d4d4d4;transform:scaleX(0.9211);transform-origin:left top;">-25</div><div class="t" style="left:406.35px;top:349.7px;font-size:11.5px;color:#d4d4d4;transform:scaleX(0.9211);transform-origin:left top;">-20</div><div class="t" style="left:430.85px;top:349.7px;font-size:11.5px;color:#d4d4d4;transform:scaleX(0.9211);transform-origin:left top;">-15</div><div class="t" style="left:461.35px;top:349.7px;font-size:11.5px;color:#d4d4d4;transform:scaleX(0.9211);transform-origin:left top;">-10</div><div class="t" style="left:497.80px;top:349.7px;font-size:11.5px;color:#d4d4d4;transform:scaleX(0.9223);transform-origin:left top;">-5</div><div class="t" style="left:512.30px;top:349.7px;font-size:11.5px;color:#d4d4d4;transform:scaleX(0.9223);transform-origin:left top;">-3</div>
<svg class="a" style="left:283px;top:348px;" width="26" height="27" viewBox="0 0 26 27"><rect x="0.8" y="0.8" width="24.4" height="25.4" rx="3.5" fill="url(#btng)" stroke="#050505" stroke-width="1.6"/><path d="M3.5 4 L19 12.5 L3.5 21z" fill="url(#grng)"/><rect x="14" y="12" width="3" height="11" fill="#5aa8f0"/><rect x="18.5" y="12" width="3" height="11" fill="#5aa8f0"/></svg>
<svg class="a" style="left:311px;top:348px;" width="26" height="27" viewBox="0 0 26 27"><rect x="0.8" y="0.8" width="24.4" height="25.4" rx="3.5" fill="url(#btng)" stroke="#050505" stroke-width="1.6"/><path d="M3.5 4 L19 12.5 L3.5 21z" fill="url(#grng)"/><rect x="12" y="13" width="10" height="10" fill="#4a98e8"/></svg>
<div class="t" style="left:343.00px;top:355.3px;font-size:14px;color:#a0a0a0;">N</div>
<div class="a" style="left:5px;top:378px;width:530px;height:15px;background:#2d2d2d;"></div>
<div class="a" style="left:9px;top:378px;width:7px;height:16px;background:#4a6aa8;"></div>
<svg class="a" style="left:17px;top:381px;" width="8" height="10" viewBox="0 0 8 10"><path d="M7 0 L0 5 L7 10z" fill="#bbb"/></svg>
<div class="a" style="left:37px;top:381px;width:24px;height:11px;background:#a8a8a8;border-radius:6px"></div>
<svg class="a" style="left:518px;top:381px;" width="8" height="10" viewBox="0 0 8 10"><path d="M0 0 L8 5 L0 10z" fill="#bbb"/></svg>
<div class="a" style="left:544px;top:259.5px;width:25px;height:1.3px;background:#d0d0d0;"></div>
<div class="a" style="left:609px;top:259.5px;width:24px;height:1.3px;background:#d0d0d0;"></div>
<div class="t" style="left:573.70px;top:234.9px;font-size:49px;color:#33c83c;font-weight:bold;transform:scaleX(0.7655);transform-origin:left top;-webkit-text-stroke:1.4px #33c83c;">B</div>
<div class="t" style="left:556.00px;top:231.3px;font-size:14px;color:#d8d8d8;font-weight:bold;transform:scaleX(0.8918);transform-origin:left top;">CURRENT</div>
<div class="t" style="left:559.00px;top:281.7px;font-size:14.5px;color:#c8c8c8;transform:scaleX(0.8738);transform-origin:left top;">PLAYING</div>
<div class="t" style="left:638.00px;top:234.4px;font-size:13px;color:#e0a030;font-weight:bold;transform:scaleX(0.9357);transform-origin:left top;">REMAIN</div>
<svg class="a" style="left:639.5px;top:249.5px;" width="174" height="42" viewBox="0 0 174 42"><g fill="#f5a623"><path d="M0.00 0.00h19.20v4.20h-19.20zM15.00 0.00h4.20v22.10h-4.20zM15.00 17.90h4.20v22.10h-4.20zM0.00 35.80h19.20v4.20h-19.20zM0.00 17.90h4.20v22.10h-4.20zM0.00 0.00h4.20v22.10h-4.20z"/><path d="M-0.1 -0.1h2.2l-2.2 2.2z M19.3 -0.1v2.2l-2.2 -2.2z M-0.1 40.1v-2.2l2.2 2.2z M19.3 40.1h-2.2l2.2 -2.2zM-0.1 18.46l1.54 1.54l-1.54 1.54z M19.3 18.46l-1.54 1.54l1.54 1.54z" fill="#313131"/><path d="M21.20 0.00h19.20v4.20h-19.20zM36.20 0.00h4.20v22.10h-4.20zM36.20 17.90h4.20v22.10h-4.20zM21.20 35.80h19.20v4.20h-19.20zM21.20 17.90h4.20v22.10h-4.20zM21.20 0.00h4.20v22.10h-4.20z"/><path d="M21.099999999999998 -0.1h2.2l-2.2 2.2z M40.5 -0.1v2.2l-2.2 -2.2z M21.099999999999998 40.1v-2.2l2.2 2.2z M40.5 40.1h-2.2l2.2 -2.2zM21.099999999999998 18.46l1.54 1.54l-1.54 1.54z M40.5 18.46l-1.54 1.54l1.54 1.54z" fill="#313131"/><rect x="46.4" y="14.8" width="3.3" height="3.2" fill="#f2cf8a"/><rect x="46.4" y="28.0" width="3.3" height="3.4" fill="#f2cf8a"/><path d="M52.20 0.00h19.20v4.20h-19.20zM67.20 0.00h4.20v22.10h-4.20zM67.20 17.90h4.20v22.10h-4.20zM52.20 35.80h19.20v4.20h-19.20zM52.20 17.90h4.20v22.10h-4.20zM52.20 0.00h4.20v22.10h-4.20z"/><path d="M52.1 -0.1h2.2l-2.2 2.2z M71.5 -0.1v2.2l-2.2 -2.2z M52.1 40.1v-2.2l2.2 2.2z M71.5 40.1h-2.2l2.2 -2.2zM52.1 18.46l1.54 1.54l-1.54 1.54z M71.5 18.46l-1.54 1.54l1.54 1.54z" fill="#313131"/><path d="M73.40 0.00h19.20v4.20h-19.20zM88.40 0.00h4.20v22.10h-4.20zM88.40 17.90h4.20v22.10h-4.20zM73.40 35.80h19.20v4.20h-19.20zM73.40 17.90h4.20v22.10h-4.20zM73.40 0.00h4.20v22.10h-4.20z"/><path d="M73.30000000000001 -0.1h2.2l-2.2 2.2z M92.7 -0.1v2.2l-2.2 -2.2z M73.30000000000001 40.1v-2.2l2.2 2.2z M92.7 40.1h-2.2l2.2 -2.2zM73.30000000000001 18.46l1.54 1.54l-1.54 1.54z M92.7 18.46l-1.54 1.54l1.54 1.54z" fill="#313131"/><rect x="98.6" y="14.8" width="3.3" height="3.2" fill="#f2cf8a"/><rect x="98.6" y="28.0" width="3.3" height="3.4" fill="#f2cf8a"/><path d="M105.50 0.00h4.20v22.10h-4.20zM105.50 17.90h19.20v4.20h-19.20zM120.50 0.00h4.20v22.10h-4.20zM120.50 17.90h4.20v22.10h-4.20z"/><path d="M105.4 -0.1h2.2l-2.2 2.2z M124.8 -0.1v2.2l-2.2 -2.2z M105.4 40.1v-2.2l2.2 2.2z M124.8 40.1h-2.2l2.2 -2.2zM105.4 18.46l1.54 1.54l-1.54 1.54z M124.8 18.46l-1.54 1.54l1.54 1.54z" fill="#313131"/><path d="M141.70 0.00h4.20v22.10h-4.20zM141.70 17.90h4.20v22.10h-4.20z"/><path d="M126.60000000000001 -0.1h2.2l-2.2 2.2z M146.0 -0.1v2.2l-2.2 -2.2z M126.60000000000001 40.1v-2.2l2.2 2.2z M146.0 40.1h-2.2l2.2 -2.2zM126.60000000000001 18.46l1.54 1.54l-1.54 1.54z M146.0 18.46l-1.54 1.54l1.54 1.54z" fill="#313131"/><path d="M150.00 2.50h8.50v1.70h-8.50zM156.80 2.50h1.70v9.85h-1.70zM156.80 10.65h1.70v9.85h-1.70zM150.00 18.80h8.50v1.70h-8.50zM150.00 2.50h1.70v9.85h-1.70zM150.00 10.65h8.50v1.70h-8.50z"/><path d="M149.9 2.4h1l-1 1z M158.6 2.4v1l-1 -1z M149.9 20.6v-1l1 1z M158.6 20.6h-1l1 -1zM149.9 10.8l0.7 0.7l-0.7 0.7z M158.6 10.8l-0.7 0.7l0.7 0.7z" fill="#313131"/><path d="M160.50 2.50h8.50v1.70h-8.50zM167.30 2.50h1.70v9.85h-1.70zM167.30 10.65h1.70v9.85h-1.70zM160.50 18.80h8.50v1.70h-8.50zM160.50 10.65h1.70v9.85h-1.70zM160.50 2.50h1.70v9.85h-1.70z"/><path d="M160.4 2.4h1l-1 1z M169.1 2.4v1l-1 -1z M160.4 20.6v-1l1 1z M169.1 20.6h-1l1 -1zM160.4 10.8l0.7 0.7l-0.7 0.7z M169.1 10.8l-0.7 0.7l0.7 0.7z" fill="#313131"/></g></svg>
<svg class="a" style="left:818px;top:235px;" width="19" height="18" viewBox="0 0 19 18"><path d="M0 0 L18 9 L0 18z" fill="#2a88d8"/><path d="M0 0 L18 9 L0 9z" fill="#58b0f0"/></svg>
<svg class="a" style="left:845px;top:232px;" width="22" height="20" viewBox="0 0 22 20"><path d="M1 10 l6 -6 h13 v13 h-13z" fill="#f4f4f4" stroke="#888" stroke-width="0.8"/><path d="M8 13 l10 -11 l3 3 l-10 11z" fill="#f0c020"/><path d="M18 2 l3 3 l1.5 -1.5 l-3 -3z" fill="#e03030"/></svg>
<div class="a" style="left:873px;top:245px;width:14px;height:1.5px;background:#777;"></div>
<svg class="a" style="left:886px;top:243px;" width="5" height="5" viewBox="0 0 5 5"><path d="M0 0l5 2.5l-5 2.5z" fill="#777"/></svg>
<svg class="a" style="left:898px;top:232px;" width="19" height="23" viewBox="0 0 19 23"><path d="M9.6 1.5 V17" stroke="#4a60d0" stroke-width="2"/><path d="M9.6 1.5 Q12 6 17 10" stroke="#8f9ae0" stroke-width="2.6" fill="none" stroke-linecap="round"/><ellipse cx="5.6" cy="17.8" rx="5.2" ry="4.4" fill="#2f5fdc"/><ellipse cx="6.2" cy="19.5" rx="3" ry="1.8" fill="#5f9cf0"/></svg>
<div class="t" style="left:926.00px;top:235.1px;font-size:15px;color:#a8a8a8;transform:scaleX(0.8929);transform-origin:left top;">Music</div>
<svg class="a" style="left:1012px;top:240px;" width="11" height="7" viewBox="0 0 11 7"><path d="M0.5 0.5h10l-5 6z" fill="none" stroke="#888"/></svg>
<svg class="a" style="left:1055px;top:240px;" width="11" height="7" viewBox="0 0 11 7"><path d="M0.5 0.5h10l-5 6z" fill="none" stroke="#888"/></svg>
<svg class="a" style="left:898px;top:257px;" width="168" height="10" viewBox="0 0 168 10"><rect x="0.30" y="1.2" width="1.1" height="7.6" fill="#787878"/><rect x="2.90" y="1.2" width="1.1" height="7.6" fill="#787878"/><rect x="5.50" y="1.2" width="1.1" height="7.6" fill="#787878"/><rect x="8.10" y="1.2" width="1.1" height="7.6" fill="#787878"/><rect x="10.70" y="1.2" width="1.1" height="7.6" fill="#787878"/><rect x="13.30" y="1.2" width="1.1" height="7.6" fill="#787878"/><rect x="15.90" y="1.2" width="1.1" height="7.6" fill="#787878"/><rect x="18.50" y="1.2" width="1.1" height="7.6" fill="#787878"/><rect x="21.10" y="1.2" width="1.1" height="7.6" fill="#787878"/><rect x="23.70" y="1.2" width="1.1" height="7.6" fill="#787878"/><rect x="26.30" y="1.2" width="1.1" height="7.6" fill="#787878"/><rect x="28.90" y="1.2" width="1.1" height="7.6" fill="#787878"/><rect x="31.50" y="1.2" width="1.1" height="7.6" fill="#787878"/><rect x="34.10" y="1.2" width="1.1" height="7.6" fill="#787878"/><rect x="36.70" y="1.2" width="1.1" height="7.6" fill="#787878"/><rect x="39.30" y="1.2" width="1.1" height="7.6" fill="#787878"/><rect x="41.90" y="1.2" width="1.1" height="7.6" fill="#787878"/><rect x="44.50" y="1.2" width="1.1" height="7.6" fill="#787878"/><rect x="47.10" y="1.2" width="1.1" height="7.6" fill="#787878"/><rect x="49.70" y="1.2" width="1.1" height="7.6" fill="#787878"/><rect x="52.30" y="1.2" width="1.1" height="7.6" fill="#787878"/><rect x="54.90" y="1.2" width="1.1" height="7.6" fill="#787878"/><rect x="57.50" y="1.2" width="1.1" height="7.6" fill="#787878"/><rect x="60.10" y="1.2" width="1.1" height="7.6" fill="#787878"/><rect x="62.70" y="1.2" width="1.1" height="7.6" fill="#787878"/><rect x="65.30" y="1.2" width="1.1" height="7.6" fill="#787878"/><rect x="67.90" y="1.2" width="1.1" height="7.6" fill="#787878"/><rect x="70.50" y="1.2" width="1.1" height="7.6" fill="#787878"/><rect x="73.10" y="1.2" width="1.1" height="7.6" fill="#787878"/><rect x="75.70" y="1.2" width="1.1" height="7.6" fill="#787878"/><rect x="78.30" y="1.2" width="1.1" height="7.6" fill="#787878"/><rect x="80.90" y="1.2" width="1.1" height="7.6" fill="#787878"/><rect x="83.50" y="1.2" width="1.1" height="7.6" fill="#787878"/><rect x="86.10" y="1.2" width="1.1" height="7.6" fill="#787878"/><rect x="88.70" y="1.2" width="1.1" height="7.6" fill="#787878"/><rect x="91.30" y="1.2" width="1.1" height="7.6" fill="#787878"/><rect x="93.90" y="1.2" width="1.1" height="7.6" fill="#787878"/><rect x="96.50" y="1.2" width="1.1" height="7.6" fill="#787878"/><rect x="99.10" y="1.2" width="1.1" height="7.6" fill="#787878"/><rect x="101.70" y="1.2" width="1.1" height="7.6" fill="#787878"/><rect x="104.30" y="1.2" width="1.1" height="7.6" fill="#787878"/><rect x="106.90" y="1.2" width="1.1" height="7.6" fill="#787878"/><rect x="109.50" y="1.2" width="1.1" height="7.6" fill="#787878"/><rect x="112.10" y="1.2" width="1.1" height="7.6" fill="#787878"/><rect x="114.70" y="1.2" width="1.1" height="7.6" fill="#787878"/><rect x="117.30" y="1.2" width="1.1" height="7.6" fill="#787878"/><rect x="119.90" y="1.2" width="1.1" height="7.6" fill="#787878"/><rect x="122.50" y="1.2" width="1.1" height="7.6" fill="#787878"/><rect x="125.10" y="1.2" width="1.1" height="7.6" fill="#787878"/><rect x="127.70" y="1.2" width="1.1" height="7.6" fill="#787878"/><rect x="130.30" y="1.2" width="1.1" height="7.6" fill="#787878"/><rect x="132.90" y="1.2" width="1.1" height="7.6" fill="#787878"/><rect x="135.50" y="1.2" width="1.1" height="7.6" fill="#787878"/><rect x="138.10" y="1.2" width="1.1" height="7.6" fill="#787878"/><rect x="140.70" y="1.2" width="1.1" height="7.6" fill="#787878"/><rect x="143.30" y="1.2" width="1.1" height="7.6" fill="#787878"/><rect x="145.90" y="1.2" width="1.1" height="7.6" fill="#787878"/><rect x="148.50" y="1.2" width="1.1" height="7.6" fill="#787878"/><rect x="151.10" y="1.2" width="1.1" height="7.6" fill="#787878"/><rect x="153.70" y="1.2" width="1.1" height="7.6" fill="#787878"/><rect x="156.30" y="1.2" width="1.1" height="7.6" fill="#787878"/><rect x="158.90" y="1.2" width="1.1" height="7.6" fill="#787878"/><rect x="161.50" y="1.2" width="1.1" height="7.6" fill="#787878"/><rect x="164.10" y="1.2" width="1.1" height="7.6" fill="#787878"/><rect x="166.70" y="1.2" width="1.1" height="7.6" fill="#787878"/><rect x="4.90" y="0" width="1.3" height="10" fill="#8a8a8a"/><rect x="31.40" y="0" width="1.3" height="10" fill="#8a8a8a"/><rect x="49.40" y="0" width="1.3" height="10" fill="#8a8a8a"/><rect x="73.90" y="0" width="1.3" height="10" fill="#8a8a8a"/><rect x="104.40" y="0" width="1.3" height="10" fill="#8a8a8a"/><rect x="137.90" y="0" width="1.3" height="10" fill="#8a8a8a"/><rect x="152.40" y="0" width="1.3" height="10" fill="#8a8a8a"/></svg><svg class="a" style="left:898px;top:280.5px;" width="168" height="10" viewBox="0 0 168 10"><rect x="0.30" y="1.2" width="1.1" height="7.6" fill="#787878"/><rect x="2.90" y="1.2" width="1.1" height="7.6" fill="#787878"/><rect x="5.50" y="1.2" width="1.1" height="7.6" fill="#787878"/><rect x="8.10" y="1.2" width="1.1" height="7.6" fill="#787878"/><rect x="10.70" y="1.2" width="1.1" height="7.6" fill="#787878"/><rect x="13.30" y="1.2" width="1.1" height="7.6" fill="#787878"/><rect x="15.90" y="1.2" width="1.1" height="7.6" fill="#787878"/><rect x="18.50" y="1.2" width="1.1" height="7.6" fill="#787878"/><rect x="21.10" y="1.2" width="1.1" height="7.6" fill="#787878"/><rect x="23.70" y="1.2" width="1.1" height="7.6" fill="#787878"/><rect x="26.30" y="1.2" width="1.1" height="7.6" fill="#787878"/><rect x="28.90" y="1.2" width="1.1" height="7.6" fill="#787878"/><rect x="31.50" y="1.2" width="1.1" height="7.6" fill="#787878"/><rect x="34.10" y="1.2" width="1.1" height="7.6" fill="#787878"/><rect x="36.70" y="1.2" width="1.1" height="7.6" fill="#787878"/><rect x="39.30" y="1.2" width="1.1" height="7.6" fill="#787878"/><rect x="41.90" y="1.2" width="1.1" height="7.6" fill="#787878"/><rect x="44.50" y="1.2" width="1.1" height="7.6" fill="#787878"/><rect x="47.10" y="1.2" width="1.1" height="7.6" fill="#787878"/><rect x="49.70" y="1.2" width="1.1" height="7.6" fill="#787878"/><rect x="52.30" y="1.2" width="1.1" height="7.6" fill="#787878"/><rect x="54.90" y="1.2" width="1.1" height="7.6" fill="#787878"/><rect x="57.50" y="1.2" width="1.1" height="7.6" fill="#787878"/><rect x="60.10" y="1.2" width="1.1" height="7.6" fill="#787878"/><rect x="62.70" y="1.2" width="1.1" height="7.6" fill="#787878"/><rect x="65.30" y="1.2" width="1.1" height="7.6" fill="#787878"/><rect x="67.90" y="1.2" width="1.1" height="7.6" fill="#787878"/><rect x="70.50" y="1.2" width="1.1" height="7.6" fill="#787878"/><rect x="73.10" y="1.2" width="1.1" height="7.6" fill="#787878"/><rect x="75.70" y="1.2" width="1.1" height="7.6" fill="#787878"/><rect x="78.30" y="1.2" width="1.1" height="7.6" fill="#787878"/><rect x="80.90" y="1.2" width="1.1" height="7.6" fill="#787878"/><rect x="83.50" y="1.2" width="1.1" height="7.6" fill="#787878"/><rect x="86.10" y="1.2" width="1.1" height="7.6" fill="#787878"/><rect x="88.70" y="1.2" width="1.1" height="7.6" fill="#787878"/><rect x="91.30" y="1.2" width="1.1" height="7.6" fill="#787878"/><rect x="93.90" y="1.2" width="1.1" height="7.6" fill="#787878"/><rect x="96.50" y="1.2" width="1.1" height="7.6" fill="#787878"/><rect x="99.10" y="1.2" width="1.1" height="7.6" fill="#787878"/><rect x="101.70" y="1.2" width="1.1" height="7.6" fill="#787878"/><rect x="104.30" y="1.2" width="1.1" height="7.6" fill="#787878"/><rect x="106.90" y="1.2" width="1.1" height="7.6" fill="#787878"/><rect x="109.50" y="1.2" width="1.1" height="7.6" fill="#787878"/><rect x="112.10" y="1.2" width="1.1" height="7.6" fill="#787878"/><rect x="114.70" y="1.2" width="1.1" height="7.6" fill="#787878"/><rect x="117.30" y="1.2" width="1.1" height="7.6" fill="#787878"/><rect x="119.90" y="1.2" width="1.1" height="7.6" fill="#787878"/><rect x="122.50" y="1.2" width="1.1" height="7.6" fill="#787878"/><rect x="125.10" y="1.2" width="1.1" height="7.6" fill="#787878"/><rect x="127.70" y="1.2" width="1.1" height="7.6" fill="#787878"/><rect x="130.30" y="1.2" width="1.1" height="7.6" fill="#787878"/><rect x="132.90" y="1.2" width="1.1" height="7.6" fill="#787878"/><rect x="135.50" y="1.2" width="1.1" height="7.6" fill="#787878"/><rect x="138.10" y="1.2" width="1.1" height="7.6" fill="#787878"/><rect x="140.70" y="1.2" width="1.1" height="7.6" fill="#787878"/><rect x="143.30" y="1.2" width="1.1" height="7.6" fill="#787878"/><rect x="145.90" y="1.2" width="1.1" height="7.6" fill="#787878"/><rect x="148.50" y="1.2" width="1.1" height="7.6" fill="#787878"/><rect x="151.10" y="1.2" width="1.1" height="7.6" fill="#787878"/><rect x="153.70" y="1.2" width="1.1" height="7.6" fill="#787878"/><rect x="156.30" y="1.2" width="1.1" height="7.6" fill="#787878"/><rect x="158.90" y="1.2" width="1.1" height="7.6" fill="#787878"/><rect x="161.50" y="1.2" width="1.1" height="7.6" fill="#787878"/><rect x="164.10" y="1.2" width="1.1" height="7.6" fill="#787878"/><rect x="166.70" y="1.2" width="1.1" height="7.6" fill="#787878"/><rect x="4.90" y="0" width="1.3" height="10" fill="#8a8a8a"/><rect x="31.40" y="0" width="1.3" height="10" fill="#8a8a8a"/><rect x="49.40" y="0" width="1.3" height="10" fill="#8a8a8a"/><rect x="73.90" y="0" width="1.3" height="10" fill="#8a8a8a"/><rect x="104.40" y="0" width="1.3" height="10" fill="#8a8a8a"/><rect x="137.90" y="0" width="1.3" height="10" fill="#8a8a8a"/><rect x="152.40" y="0" width="1.3" height="10" fill="#8a8a8a"/></svg><div class="a" style="left:898px;top:258px;width:114px;height:8px;background:repeating-linear-gradient(90deg,#b0c6f0 0 1.8px,#8ea8dc 1.8px 2.6px);"></div><div class="a" style="left:898px;top:281.5px;width:111px;height:8px;background:repeating-linear-gradient(90deg,#b0c6f0 0 1.8px,#8ea8dc 1.8px 2.6px);"></div><div class="t" style="left:895.85px;top:267.7px;font-size:11.5px;color:#d4d4d4;transform:scaleX(0.9211);transform-origin:left top;">-40</div><div class="t" style="left:922.35px;top:267.7px;font-size:11.5px;color:#d4d4d4;transform:scaleX(0.9211);transform-origin:left top;">-25</div><div class="t" style="left:940.35px;top:267.7px;font-size:11.5px;color:#d4d4d4;transform:scaleX(0.9211);transform-origin:left top;">-20</div><div class="t" style="left:964.85px;top:267.7px;font-size:11.5px;color:#d4d4d4;transform:scaleX(0.9211);transform-origin:left top;">-15</div><div class="t" style="left:995.35px;top:267.7px;font-size:11.5px;color:#d4d4d4;transform:scaleX(0.9211);transform-origin:left top;">-10</div><div class="t" style="left:1031.80px;top:267.7px;font-size:11.5px;color:#d4d4d4;transform:scaleX(0.9223);transform-origin:left top;">-5</div><div class="t" style="left:1046.30px;top:267.7px;font-size:11.5px;color:#d4d4d4;transform:scaleX(0.9223);transform-origin:left top;">-3</div>
<svg class="a" style="left:817px;top:266px;" width="26" height="27" viewBox="0 0 26 27"><rect x="0.8" y="0.8" width="24.4" height="25.4" rx="3.5" fill="url(#btng)" stroke="#050505" stroke-width="1.6"/><path d="M3.5 4 L19 12.5 L3.5 21z" fill="url(#grng)"/><rect x="14" y="12" width="3" height="11" fill="#5aa8f0"/><rect x="18.5" y="12" width="3" height="11" fill="#5aa8f0"/></svg>
<svg class="a" style="left:845px;top:266px;" width="26" height="27" viewBox="0 0 26 27"><rect x="0.8" y="0.8" width="24.4" height="25.4" rx="3.5" fill="url(#btng)" stroke="#050505" stroke-width="1.6"/><path d="M3.5 4 L19 12.5 L3.5 21z" fill="url(#grng)"/><rect x="12" y="13" width="10" height="10" fill="#4a98e8"/></svg>
<div class="t" style="left:877.00px;top:273.3px;font-size:14px;color:#a0a0a0;">N</div>
<div class="a" style="left:539px;top:296px;width:530px;height:15px;background:#2d2d2d;"></div>
<div class="a" style="left:543px;top:296px;width:386px;height:16px;background:#2d8a35;"></div>
<svg class="a" style="left:551px;top:299px;" width="8" height="10" viewBox="0 0 8 10"><path d="M7 0 L0 5 L7 10z" fill="#7bd080"/></svg>
<div class="a" style="left:903px;top:299px;width:24px;height:11px;background:#8bd68f;border-radius:6px"></div>
<svg class="a" style="left:1052px;top:299px;" width="8" height="10" viewBox="0 0 8 10"><path d="M0 0 L8 5 L0 10z" fill="#bbb"/></svg>
<div class="a" style="left:544px;top:341.5px;width:25px;height:1.3px;background:#d0d0d0;"></div>
<div class="a" style="left:609px;top:341.5px;width:24px;height:1.3px;background:#d0d0d0;"></div>
<div class="t" style="left:571.70px;top:316.9px;font-size:49px;color:#f5d010;font-weight:bold;transform:scaleX(0.8927);transform-origin:left top;-webkit-text-stroke:1.4px #f5d010;">D</div>
<div class="t" style="left:569.00px;top:363.7px;font-size:14.5px;color:#c8c8c8;transform:scaleX(0.8516);transform-origin:left top;">CUED</div>
<div class="t" style="left:638.00px;top:316.4px;font-size:13px;color:#e0a030;font-weight:bold;transform:scaleX(0.9357);transform-origin:left top;">REMAIN</div>
<svg class="a" style="left:639.5px;top:331.5px;" width="174" height="42" viewBox="0 0 174 42"><g fill="#f5a623"><path d="M0.00 0.00h19.20v4.20h-19.20zM15.00 0.00h4.20v22.10h-4.20zM15.00 17.90h4.20v22.10h-4.20zM0.00 35.80h19.20v4.20h-19.20zM0.00 17.90h4.20v22.10h-4.20zM0.00 0.00h4.20v22.10h-4.20z"/><path d="M-0.1 -0.1h2.2l-2.2 2.2z M19.3 -0.1v2.2l-2.2 -2.2z M-0.1 40.1v-2.2l2.2 2.2z M19.3 40.1h-2.2l2.2 -2.2zM-0.1 18.46l1.54 1.54l-1.54 1.54z M19.3 18.46l-1.54 1.54l1.54 1.54z" fill="#313131"/><path d="M21.20 0.00h19.20v4.20h-19.20zM36.20 0.00h4.20v22.10h-4.20zM36.20 17.90h4.20v22.10h-4.20zM21.20 35.80h19.20v4.20h-19.20zM21.20 17.90h4.20v22.10h-4.20zM21.20 0.00h4.20v22.10h-4.20z"/><path d="M21.099999999999998 -0.1h2.2l-2.2 2.2z M40.5 -0.1v2.2l-2.2 -2.2z M21.099999999999998 40.1v-2.2l2.2 2.2z M40.5 40.1h-2.2l2.2 -2.2zM21.099999999999998 18.46l1.54 1.54l-1.54 1.54z M40.5 18.46l-1.54 1.54l1.54 1.54z" fill="#313131"/><rect x="46.4" y="14.8" width="3.3" height="3.2" fill="#f2cf8a"/><rect x="46.4" y="28.0" width="3.3" height="3.4" fill="#f2cf8a"/><path d="M52.20 0.00h19.20v4.20h-19.20zM67.20 0.00h4.20v22.10h-4.20zM67.20 17.90h4.20v22.10h-4.20zM52.20 35.80h19.20v4.20h-19.20zM52.20 17.90h4.20v22.10h-4.20zM52.20 0.00h4.20v22.10h-4.20z"/><path d="M52.1 -0.1h2.2l-2.2 2.2z M71.5 -0.1v2.2l-2.2 -2.2z M52.1 40.1v-2.2l2.2 2.2z M71.5 40.1h-2.2l2.2 -2.2zM52.1 18.46l1.54 1.54l-1.54 1.54z M71.5 18.46l-1.54 1.54l1.54 1.54z" fill="#313131"/><path d="M73.40 0.00h19.20v4.20h-19.20zM88.40 0.00h4.20v22.10h-4.20zM88.40 17.90h4.20v22.10h-4.20zM73.40 35.80h19.20v4.20h-19.20zM73.40 17.90h4.20v22.10h-4.20zM73.40 0.00h4.20v22.10h-4.20z"/><path d="M73.30000000000001 -0.1h2.2l-2.2 2.2z M92.7 -0.1v2.2l-2.2 -2.2z M73.30000000000001 40.1v-2.2l2.2 2.2z M92.7 40.1h-2.2l2.2 -2.2zM73.30000000000001 18.46l1.54 1.54l-1.54 1.54z M92.7 18.46l-1.54 1.54l1.54 1.54z" fill="#313131"/><rect x="98.6" y="14.8" width="3.3" height="3.2" fill="#f2cf8a"/><rect x="98.6" y="28.0" width="3.3" height="3.4" fill="#f2cf8a"/><path d="M105.50 0.00h19.20v4.20h-19.20zM120.50 0.00h4.20v22.10h-4.20zM120.50 17.90h4.20v22.10h-4.20zM105.50 35.80h19.20v4.20h-19.20zM105.50 17.90h4.20v22.10h-4.20zM105.50 0.00h4.20v22.10h-4.20z"/><path d="M105.4 -0.1h2.2l-2.2 2.2z M124.8 -0.1v2.2l-2.2 -2.2z M105.4 40.1v-2.2l2.2 2.2z M124.8 40.1h-2.2l2.2 -2.2zM105.4 18.46l1.54 1.54l-1.54 1.54z M124.8 18.46l-1.54 1.54l1.54 1.54z" fill="#313131"/><path d="M126.70 0.00h19.20v4.20h-19.20zM141.70 0.00h4.20v22.10h-4.20zM141.70 17.90h4.20v22.10h-4.20zM126.70 35.80h19.20v4.20h-19.20zM126.70 0.00h4.20v22.10h-4.20zM126.70 17.90h19.20v4.20h-19.20z"/><path d="M126.60000000000001 -0.1h2.2l-2.2 2.2z M146.0 -0.1v2.2l-2.2 -2.2z M126.60000000000001 40.1v-2.2l2.2 2.2z M146.0 40.1h-2.2l2.2 -2.2zM126.60000000000001 18.46l1.54 1.54l-1.54 1.54z M146.0 18.46l-1.54 1.54l1.54 1.54z" fill="#313131"/><path d="M150.00 2.50h8.50v1.70h-8.50zM150.00 2.50h1.70v9.85h-1.70zM150.00 10.65h8.50v1.70h-8.50zM150.00 10.65h1.70v9.85h-1.70zM150.00 18.80h8.50v1.70h-8.50zM156.80 10.65h1.70v9.85h-1.70z"/><path d="M149.9 2.4h1l-1 1z M158.6 2.4v1l-1 -1z M149.9 20.6v-1l1 1z M158.6 20.6h-1l1 -1zM149.9 10.8l0.7 0.7l-0.7 0.7z M158.6 10.8l-0.7 0.7l0.7 0.7z" fill="#313131"/><path d="M160.50 2.50h8.50v1.70h-8.50zM167.30 2.50h1.70v9.85h-1.70zM167.30 10.65h1.70v9.85h-1.70zM160.50 18.80h8.50v1.70h-8.50zM160.50 2.50h1.70v9.85h-1.70zM160.50 10.65h8.50v1.70h-8.50z"/><path d="M160.4 2.4h1l-1 1z M169.1 2.4v1l-1 -1z M160.4 20.6v-1l1 1z M169.1 20.6h-1l1 -1zM160.4 10.8l0.7 0.7l-0.7 0.7z M169.1 10.8l-0.7 0.7l0.7 0.7z" fill="#313131"/></g></svg>
<svg class="a" style="left:818px;top:317px;" width="19" height="18" viewBox="0 0 19 18"><path d="M0 0 L18 9 L0 18z" fill="#2a88d8"/><path d="M0 0 L18 9 L0 9z" fill="#58b0f0"/></svg>
<svg class="a" style="left:845px;top:314px;" width="22" height="20" viewBox="0 0 22 20"><path d="M1 10 l6 -6 h13 v13 h-13z" fill="#f4f4f4" stroke="#888" stroke-width="0.8"/><path d="M8 13 l10 -11 l3 3 l-10 11z" fill="#f0c020"/><path d="M18 2 l3 3 l1.5 -1.5 l-3 -3z" fill="#e03030"/></svg>
<div class="a" style="left:873px;top:327px;width:14px;height:1.5px;background:#777;"></div>
<svg class="a" style="left:886px;top:325px;" width="5" height="5" viewBox="0 0 5 5"><path d="M0 0l5 2.5l-5 2.5z" fill="#777"/></svg>
<svg class="a" style="left:898px;top:314px;" width="22" height="22" viewBox="0 0 22 22"><path d="M11 1 L14 8 L21 8.5 L15.5 13 L17.5 20.5 L11 16.5 L4.5 20.5 L6.5 13 L1 8.5 L8 8z" fill="#f8c818" stroke="#a87800" stroke-width="0.8"/></svg>
<div class="t" style="left:926.00px;top:317.1px;font-size:15px;color:#a8a8a8;transform:scaleX(0.8673);transform-origin:left top;">Jingle</div>
<svg class="a" style="left:1012px;top:322px;" width="11" height="7" viewBox="0 0 11 7"><path d="M0.5 0.5h10l-5 6z" fill="none" stroke="#888"/></svg>
<svg class="a" style="left:1055px;top:322px;" width="11" height="7" viewBox="0 0 11 7"><path d="M0.5 0.5h10l-5 6z" fill="none" stroke="#888"/></svg>
<svg class="a" style="left:898px;top:339px;" width="168" height="10" viewBox="0 0 168 10"><rect x="0.30" y="1.2" width="1.1" height="7.6" fill="#787878"/><rect x="2.90" y="1.2" width="1.1" height="7.6" fill="#787878"/><rect x="5.50" y="1.2" width="1.1" height="7.6" fill="#787878"/><rect x="8.10" y="1.2" width="1.1" height="7.6" fill="#787878"/><rect x="10.70" y="1.2" width="1.1" height="7.6" fill="#787878"/><rect x="13.30" y="1.2" width="1.1" height="7.6" fill="#787878"/><rect x="15.90" y="1.2" width="1.1" height="7.6" fill="#787878"/><rect x="18.50" y="1.2" width="1.1" height="7.6" fill="#787878"/><rect x="21.10" y="1.2" width="1.1" height="7.6" fill="#787878"/><rect x="23.70" y="1.2" width="1.1" height="7.6" fill="#787878"/><rect x="26.30" y="1.2" width="1.1" height="7.6" fill="#787878"/><rect x="28.90" y="1.2" width="1.1" height="7.6" fill="#787878"/><rect x="31.50" y="1.2" width="1.1" height="7.6" fill="#787878"/><rect x="34.10" y="1.2" width="1.1" height="7.6" fill="#787878"/><rect x="36.70" y="1.2" width="1.1" height="7.6" fill="#787878"/><rect x="39.30" y="1.2" width="1.1" height="7.6" fill="#787878"/><rect x="41.90" y="1.2" width="1.1" height="7.6" fill="#787878"/><rect x="44.50" y="1.2" width="1.1" height="7.6" fill="#787878"/><rect x="47.10" y="1.2" width="1.1" height="7.6" fill="#787878"/><rect x="49.70" y="1.2" width="1.1" height="7.6" fill="#787878"/><rect x="52.30" y="1.2" width="1.1" height="7.6" fill="#787878"/><rect x="54.90" y="1.2" width="1.1" height="7.6" fill="#787878"/><rect x="57.50" y="1.2" width="1.1" height="7.6" fill="#787878"/><rect x="60.10" y="1.2" width="1.1" height="7.6" fill="#787878"/><rect x="62.70" y="1.2" width="1.1" height="7.6" fill="#787878"/><rect x="65.30" y="1.2" width="1.1" height="7.6" fill="#787878"/><rect x="67.90" y="1.2" width="1.1" height="7.6" fill="#787878"/><rect x="70.50" y="1.2" width="1.1" height="7.6" fill="#787878"/><rect x="73.10" y="1.2" width="1.1" height="7.6" fill="#787878"/><rect x="75.70" y="1.2" width="1.1" height="7.6" fill="#787878"/><rect x="78.30" y="1.2" width="1.1" height="7.6" fill="#787878"/><rect x="80.90" y="1.2" width="1.1" height="7.6" fill="#787878"/><rect x="83.50" y="1.2" width="1.1" height="7.6" fill="#787878"/><rect x="86.10" y="1.2" width="1.1" height="7.6" fill="#787878"/><rect x="88.70" y="1.2" width="1.1" height="7.6" fill="#787878"/><rect x="91.30" y="1.2" width="1.1" height="7.6" fill="#787878"/><rect x="93.90" y="1.2" width="1.1" height="7.6" fill="#787878"/><rect x="96.50" y="1.2" width="1.1" height="7.6" fill="#787878"/><rect x="99.10" y="1.2" width="1.1" height="7.6" fill="#787878"/><rect x="101.70" y="1.2" width="1.1" height="7.6" fill="#787878"/><rect x="104.30" y="1.2" width="1.1" height="7.6" fill="#787878"/><rect x="106.90" y="1.2" width="1.1" height="7.6" fill="#787878"/><rect x="109.50" y="1.2" width="1.1" height="7.6" fill="#787878"/><rect x="112.10" y="1.2" width="1.1" height="7.6" fill="#787878"/><rect x="114.70" y="1.2" width="1.1" height="7.6" fill="#787878"/><rect x="117.30" y="1.2" width="1.1" height="7.6" fill="#787878"/><rect x="119.90" y="1.2" width="1.1" height="7.6" fill="#787878"/><rect x="122.50" y="1.2" width="1.1" height="7.6" fill="#787878"/><rect x="125.10" y="1.2" width="1.1" height="7.6" fill="#787878"/><rect x="127.70" y="1.2" width="1.1" height="7.6" fill="#787878"/><rect x="130.30" y="1.2" width="1.1" height="7.6" fill="#787878"/><rect x="132.90" y="1.2" width="1.1" height="7.6" fill="#787878"/><rect x="135.50" y="1.2" width="1.1" height="7.6" fill="#787878"/><rect x="138.10" y="1.2" width="1.1" height="7.6" fill="#787878"/><rect x="140.70" y="1.2" width="1.1" height="7.6" fill="#787878"/><rect x="143.30" y="1.2" width="1.1" height="7.6" fill="#787878"/><rect x="145.90" y="1.2" width="1.1" height="7.6" fill="#787878"/><rect x="148.50" y="1.2" width="1.1" height="7.6" fill="#787878"/><rect x="151.10" y="1.2" width="1.1" height="7.6" fill="#787878"/><rect x="153.70" y="1.2" width="1.1" height="7.6" fill="#787878"/><rect x="156.30" y="1.2" width="1.1" height="7.6" fill="#787878"/><rect x="158.90" y="1.2" width="1.1" height="7.6" fill="#787878"/><rect x="161.50" y="1.2" width="1.1" height="7.6" fill="#787878"/><rect x="164.10" y="1.2" width="1.1" height="7.6" fill="#787878"/><rect x="166.70" y="1.2" width="1.1" height="7.6" fill="#787878"/><rect x="4.90" y="0" width="1.3" height="10" fill="#8a8a8a"/><rect x="31.40" y="0" width="1.3" height="10" fill="#8a8a8a"/><rect x="49.40" y="0" width="1.3" height="10" fill="#8a8a8a"/><rect x="73.90" y="0" width="1.3" height="10" fill="#8a8a8a"/><rect x="104.40" y="0" width="1.3" height="10" fill="#8a8a8a"/><rect x="137.90" y="0" width="1.3" height="10" fill="#8a8a8a"/><rect x="152.40" y="0" width="1.3" height="10" fill="#8a8a8a"/></svg><svg class="a" style="left:898px;top:362.5px;" width="168" height="10" viewBox="0 0 168 10"><rect x="0.30" y="1.2" width="1.1" height="7.6" fill="#787878"/><rect x="2.90" y="1.2" width="1.1" height="7.6" fill="#787878"/><rect x="5.50" y="1.2" width="1.1" height="7.6" fill="#787878"/><rect x="8.10" y="1.2" width="1.1" height="7.6" fill="#787878"/><rect x="10.70" y="1.2" width="1.1" height="7.6" fill="#787878"/><rect x="13.30" y="1.2" width="1.1" height="7.6" fill="#787878"/><rect x="15.90" y="1.2" width="1.1" height="7.6" fill="#787878"/><rect x="18.50" y="1.2" width="1.1" height="7.6" fill="#787878"/><rect x="21.10" y="1.2" width="1.1" height="7.6" fill="#787878"/><rect x="23.70" y="1.2" width="1.1" height="7.6" fill="#787878"/><rect x="26.30" y="1.2" width="1.1" height="7.6" fill="#787878"/><rect x="28.90" y="1.2" width="1.1" height="7.6" fill="#787878"/><rect x="31.50" y="1.2" width="1.1" height="7.6" fill="#787878"/><rect x="34.10" y="1.2" width="1.1" height="7.6" fill="#787878"/><rect x="36.70" y="1.2" width="1.1" height="7.6" fill="#787878"/><rect x="39.30" y="1.2" width="1.1" height="7.6" fill="#787878"/><rect x="41.90" y="1.2" width="1.1" height="7.6" fill="#787878"/><rect x="44.50" y="1.2" width="1.1" height="7.6" fill="#787878"/><rect x="47.10" y="1.2" width="1.1" height="7.6" fill="#787878"/><rect x="49.70" y="1.2" width="1.1" height="7.6" fill="#787878"/><rect x="52.30" y="1.2" width="1.1" height="7.6" fill="#787878"/><rect x="54.90" y="1.2" width="1.1" height="7.6" fill="#787878"/><rect x="57.50" y="1.2" width="1.1" height="7.6" fill="#787878"/><rect x="60.10" y="1.2" width="1.1" height="7.6" fill="#787878"/><rect x="62.70" y="1.2" width="1.1" height="7.6" fill="#787878"/><rect x="65.30" y="1.2" width="1.1" height="7.6" fill="#787878"/><rect x="67.90" y="1.2" width="1.1" height="7.6" fill="#787878"/><rect x="70.50" y="1.2" width="1.1" height="7.6" fill="#787878"/><rect x="73.10" y="1.2" width="1.1" height="7.6" fill="#787878"/><rect x="75.70" y="1.2" width="1.1" height="7.6" fill="#787878"/><rect x="78.30" y="1.2" width="1.1" height="7.6" fill="#787878"/><rect x="80.90" y="1.2" width="1.1" height="7.6" fill="#787878"/><rect x="83.50" y="1.2" width="1.1" height="7.6" fill="#787878"/><rect x="86.10" y="1.2" width="1.1" height="7.6" fill="#787878"/><rect x="88.70" y="1.2" width="1.1" height="7.6" fill="#787878"/><rect x="91.30" y="1.2" width="1.1" height="7.6" fill="#787878"/><rect x="93.90" y="1.2" width="1.1" height="7.6" fill="#787878"/><rect x="96.50" y="1.2" width="1.1" height="7.6" fill="#787878"/><rect x="99.10" y="1.2" width="1.1" height="7.6" fill="#787878"/><rect x="101.70" y="1.2" width="1.1" height="7.6" fill="#787878"/><rect x="104.30" y="1.2" width="1.1" height="7.6" fill="#787878"/><rect x="106.90" y="1.2" width="1.1" height="7.6" fill="#787878"/><rect x="109.50" y="1.2" width="1.1" height="7.6" fill="#787878"/><rect x="112.10" y="1.2" width="1.1" height="7.6" fill="#787878"/><rect x="114.70" y="1.2" width="1.1" height="7.6" fill="#787878"/><rect x="117.30" y="1.2" width="1.1" height="7.6" fill="#787878"/><rect x="119.90" y="1.2" width="1.1" height="7.6" fill="#787878"/><rect x="122.50" y="1.2" width="1.1" height="7.6" fill="#787878"/><rect x="125.10" y="1.2" width="1.1" height="7.6" fill="#787878"/><rect x="127.70" y="1.2" width="1.1" height="7.6" fill="#787878"/><rect x="130.30" y="1.2" width="1.1" height="7.6" fill="#787878"/><rect x="132.90" y="1.2" width="1.1" height="7.6" fill="#787878"/><rect x="135.50" y="1.2" width="1.1" height="7.6" fill="#787878"/><rect x="138.10" y="1.2" width="1.1" height="7.6" fill="#787878"/><rect x="140.70" y="1.2" width="1.1" height="7.6" fill="#787878"/><rect x="143.30" y="1.2" width="1.1" height="7.6" fill="#787878"/><rect x="145.90" y="1.2" width="1.1" height="7.6" fill="#787878"/><rect x="148.50" y="1.2" width="1.1" height="7.6" fill="#787878"/><rect x="151.10" y="1.2" width="1.1" height="7.6" fill="#787878"/><rect x="153.70" y="1.2" width="1.1" height="7.6" fill="#787878"/><rect x="156.30" y="1.2" width="1.1" height="7.6" fill="#787878"/><rect x="158.90" y="1.2" width="1.1" height="7.6" fill="#787878"/><rect x="161.50" y="1.2" width="1.1" height="7.6" fill="#787878"/><rect x="164.10" y="1.2" width="1.1" height="7.6" fill="#787878"/><rect x="166.70" y="1.2" width="1.1" height="7.6" fill="#787878"/><rect x="4.90" y="0" width="1.3" height="10" fill="#8a8a8a"/><rect x="31.40" y="0" width="1.3" height="10" fill="#8a8a8a"/><rect x="49.40" y="0" width="1.3" height="10" fill="#8a8a8a"/><rect x="73.90" y="0" width="1.3" height="10" fill="#8a8a8a"/><rect x="104.40" y="0" width="1.3" height="10" fill="#8a8a8a"/><rect x="137.90" y="0" width="1.3" height="10" fill="#8a8a8a"/><rect x="152.40" y="0" width="1.3" height="10" fill="#8a8a8a"/></svg><div class="t" style="left:895.85px;top:349.7px;font-size:11.5px;color:#d4d4d4;transform:scaleX(0.9211);transform-origin:left top;">-40</div><div class="t" style="left:922.35px;top:349.7px;font-size:11.5px;color:#d4d4d4;transform:scaleX(0.9211);transform-origin:left top;">-25</div><div class="t" style="left:940.35px;top:349.7px;font-size:11.5px;color:#d4d4d4;transform:scaleX(0.9211);transform-origin:left top;">-20</div><div class="t" style="left:964.85px;top:349.7px;font-size:11.5px;color:#d4d4d4;transform:scaleX(0.9211);transform-origin:left top;">-15</div><div class="t" style="left:995.35px;top:349.7px;font-size:11.5px;color:#d4d4d4;transform:scaleX(0.9211);transform-origin:left top;">-10</div><div class="t" style="left:1031.80px;top:349.7px;font-size:11.5px;color:#d4d4d4;transform:scaleX(0.9223);transform-origin:left top;">-5</div><div class="t" style="left:1046.30px;top:349.7px;font-size:11.5px;color:#d4d4d4;transform:scaleX(0.9223);transform-origin:left top;">-3</div>
<svg class="a" style="left:817px;top:348px;" width="26" height="27" viewBox="0 0 26 27"><rect x="0.8" y="0.8" width="24.4" height="25.4" rx="3.5" fill="url(#btng)" stroke="#050505" stroke-width="1.6"/><path d="M3.5 4 L19 12.5 L3.5 21z" fill="url(#grng)"/><rect x="14" y="12" width="3" height="11" fill="#5aa8f0"/><rect x="18.5" y="12" width="3" height="11" fill="#5aa8f0"/></svg>
<svg class="a" style="left:845px;top:348px;" width="26" height="27" viewBox="0 0 26 27"><rect x="0.8" y="0.8" width="24.4" height="25.4" rx="3.5" fill="url(#btng)" stroke="#050505" stroke-width="1.6"/><path d="M3.5 4 L19 12.5 L3.5 21z" fill="url(#grng)"/><rect x="12" y="13" width="10" height="10" fill="#4a98e8"/></svg>
<div class="t" style="left:877.00px;top:355.3px;font-size:14px;color:#a0a0a0;">N</div>
<div class="a" style="left:539px;top:378px;width:530px;height:15px;background:#2d2d2d;"></div>
<svg class="a" style="left:551px;top:381px;" width="8" height="10" viewBox="0 0 8 10"><path d="M7 0 L0 5 L7 10z" fill="#bbb"/></svg>
<div class="a" style="left:570px;top:381px;width:24px;height:11px;background:#a8a8a8;border-radius:6px"></div>
<svg class="a" style="left:1052px;top:381px;" width="8" height="10" viewBox="0 0 8 10"><path d="M0 0 L8 5 L0 10z" fill="#bbb"/></svg>
<div class="a" style="left:4px;top:397px;width:1066px;height:34px;background:#2c2c2c;border:1px solid #5a5a5a"></div>
<div class="a" style="left:64px;top:398px;width:50px;height:14px;background:linear-gradient(#606060,#202020);border-radius:3px"></div>
<svg class="a" style="left:83px;top:401px;" width="12" height="9" viewBox="0 0 12 9"><rect x="0" y="0" width="12" height="1.5" fill="#fff"/><path d="M2 3h8l-4 5z" fill="#fff"/><rect x="1" y="7" width="10" height="2" fill="#fff"/></svg>
<div class="t" style="left:42.00px;top:416.0px;font-size:12.5px;color:#b0b0b0;transform:scaleX(1.0375);transform-origin:left top;">TIMECODE:</div>
<div class="t" style="left:125.00px;top:399.7px;font-size:27px;color:#f0a030;transform:scaleX(0.8889);transform-origin:left top;-webkit-text-stroke:0.5px currentColor;">B</div>
<div class="t" style="left:156.00px;top:400.4px;font-size:13px;color:#f0a030;">P</div>
<div class="t" style="left:169.00px;top:400.3px;font-size:26px;color:#f0a030;transform:scaleX(0.9091);transform-origin:left top;-webkit-text-stroke:0.5px currentColor;">1:56</div>
<div class="t" style="left:292.00px;top:400.4px;font-size:13px;color:#f0a030;">N</div>
<div class="t" style="left:303.00px;top:400.3px;font-size:26px;color:#f0a030;transform:scaleX(0.9684);transform-origin:left top;-webkit-text-stroke:0.5px currentColor;">0:41</div>
<div class="t" style="left:727.00px;top:400.4px;font-size:13px;color:#f05030;transform:scaleX(0.9043);transform-origin:left top;">PG</div>
<div class="t" style="left:745.00px;top:400.3px;font-size:26px;color:#f05030;transform:scaleX(0.9498);transform-origin:left top;-webkit-text-stroke:0.5px currentColor;">-46:30</div>
<svg class="a" style="left:509px;top:339px;" width="34" height="53" viewBox="0 0 34 53"><path d="M2 2 L2 44 L12 35 L19 50 L26 47 L19 32 L32 32z" fill="#fff" stroke="#000" stroke-width="2.5" stroke-linejoin="round"/></svg>
<div class="a" style="left:3px;top:430px;width:1067px;height:947px;background:#353535;"></div>
<div class="a" style="left:3px;top:430px;width:2px;height:947px;background:#0a0a0a;"></div>
<div class="a" style="left:3px;top:1375px;width:1067px;height:2px;background:#0a0a0a;"></div>
<div class="a" style="left:1067px;top:430px;width:3px;height:947px;background:#0a0a0a;"></div>
<div class="a" style="left:1070px;top:198px;width:10px;height:1180px;background:#2b2b2b;"></div>
<div class="a" style="left:1075px;top:228px;width:1px;height:1150px;background:#3c3c3c;"></div>
<div class="a" style="left:5px;top:431px;width:1062px;height:84px;background:#383838;"></div>
<div class="a" style="left:5px;top:462px;width:1037px;height:1px;background:#2c2c2c;"></div>
<div class="a" style="left:264px;top:488px;width:622px;height:1px;background:#2c2c2c;"></div>
<div class="a" style="left:5px;top:514px;width:1037px;height:1px;background:#2c2c2c;"></div>
<div class="a" style="left:30px;top:431px;width:1px;height:83px;background:#2c2c2c;"></div>
<div class="a" style="left:264px;top:431px;width:1px;height:83px;background:#2c2c2c;"></div>
<div class="a" style="left:886px;top:431px;width:1px;height:83px;background:#2c2c2c;"></div>
<div class="a" style="left:1041px;top:431px;width:1px;height:83px;background:#2c2c2c;"></div>
<div class="a" style="left:88px;top:462px;width:1px;height:52px;background:#2c2c2c;"></div>
<div class="a" style="left:139px;top:462px;width:1px;height:52px;background:#2c2c2c;"></div>
<div class="a" style="left:975px;top:462px;width:1px;height:52px;background:#2c2c2c;"></div>
<div class="t" style="left:37.00px;top:437.9px;font-size:16.5px;color:#c8c8c8;font-weight:bold;transform:scaleX(1.0208);transform-origin:left top;">Playlist</div>
<div class="t" style="left:270.00px;top:437.9px;font-size:16.5px;color:#c8c8c8;font-weight:bold;transform:scaleX(0.9953);transform-origin:left top;">Entry</div>
<div class="t" style="left:893.00px;top:437.9px;font-size:16.5px;color:#c8c8c8;font-weight:bold;transform:scaleX(1.0112);transform-origin:left top;">Options</div>
<div class="t" style="left:35.00px;top:479.8px;font-size:14px;color:#a8a8a8;transform:scaleX(0.9824);transform-origin:left top;">Player</div>
<div class="t" style="left:125.00px;top:479.8px;font-size:14px;color:#a8a8a8;transform:scaleX(1.0256);transform-origin:left top;">#</div>
<div class="t" style="left:144.00px;top:479.8px;font-size:14px;color:#a8a8a8;transform:scaleX(0.9760);transform-origin:left top;">Schedule</div>
<div class="t" style="left:270.00px;top:466.8px;font-size:14px;color:#a8a8a8;transform:scaleX(1.0658);transform-origin:left top;">Artist</div>
<div class="t" style="left:270.00px;top:492.8px;font-size:14px;color:#a8a8a8;transform:scaleX(1.0039);transform-origin:left top;">Title</div>
<div class="t" style="left:891.00px;top:479.8px;font-size:14px;color:#a8a8a8;transform:scaleX(0.9894);transform-origin:left top;">Year</div>
<div class="t" style="left:980.00px;top:479.8px;font-size:14px;color:#a8a8a8;transform:scaleX(0.9870);transform-origin:left top;">Playtime</div>
<div class="a" style="left:1043px;top:515px;width:24px;height:860px;background:#333333;"></div>
<svg class="a" style="left:1050px;top:520px;" width="10" height="9" viewBox="0 0 10 9"><path d="M5 0 L10 8 L0 8z" fill="#bbb"/></svg>
<div class="a" style="left:1049px;top:538px;width:16px;height:570px;background:linear-gradient(90deg,#8c8c8c,#aaaaaa 30%,#aaaaaa 70%,#8c8c8c);border-radius:4px"></div>
<svg class="a" style="left:1050px;top:1359px;" width="10" height="9" viewBox="0 0 10 9"><path d="M0 0 L10 0 L5 8z" fill="#bbb"/></svg>
<div class="a" style="left:5px;top:515px;width:25px;height:57px;background:#393939;"></div>
<div class="a" style="left:30px;top:515px;width:1px;height:57px;background:#2f2f2f;"></div>
<div class="a" style="left:31px;top:515px;width:21px;height:57px;background:#424242;"></div>
<div class="a" style="left:31px;top:571px;width:21px;height:1.5px;background:#373737;"></div>
<div class="a" style="left:52px;top:515px;width:991px;height:57px;background:#dcdcdc;"></div>
<div class="a" style="left:52px;top:571px;width:991px;height:2px;background:#616161;"></div>
<div class="a" style="left:264px;top:515px;width:1.5px;height:57px;background:#444;"></div>
<svg class="a" style="left:59px;top:529px;" width="19" height="18" viewBox="0 0 19 18"><path d="M9.3 1.8V17.2M1.5 4.6L17 13.3M1.5 13.3L17 4.6" stroke="#000" stroke-width="3.4" stroke-linecap="round"/></svg>
<div class="t" style="right:946.48px;top:533.8px;font-size:20px;color:#333;">1</div>
<div class="t" style="right:821.54px;top:533.7px;font-size:20.5px;color:#000;font-weight:bold;transform:scaleX(0.9501);transform-origin:right top;-webkit-text-stroke:0.35px #000;">10:01:22</div>
<div class="t" style="left:270.00px;top:521.6px;font-size:21px;color:#000;font-weight:bold;transform:scaleX(1.0337);transform-origin:left top;-webkit-text-stroke:0.35px #000;">ATR</div>
<div class="t" style="left:270.00px;top:549.6px;font-size:21px;color:#000;font-weight:bold;transform:scaleX(0.9683);transform-origin:left top;-webkit-text-stroke:0.35px #000;">TOTH</div>
<div class="t" style="left:893.00px;top:533.8px;font-size:20px;color:#2a2a2a;transform:scaleX(1.0337);transform-origin:left top;">2020</div>
<div class="t" style="right:42.47px;top:533.7px;font-size:20.5px;color:#000;font-weight:bold;-webkit-text-stroke:0.35px #000;">0:33</div>
<svg class="a" style="left:31px;top:534px;" width="18" height="24" viewBox="0 0 18 24"><path d="M7.6 1 V17" stroke="#5566cc" stroke-width="1.6"/><path d="M7.6 1 L15.5 9.5" stroke="#8f9ae0" stroke-width="2.4" stroke-linecap="round"/><ellipse cx="4.8" cy="18" rx="4.3" ry="3.9" fill="#2f5fdc"/><ellipse cx="5.5" cy="19.5" rx="2.6" ry="1.6" fill="#5f9cf0"/></svg>
<div class="a" style="left:5px;top:572px;width:25px;height:58px;background:#393939;"></div>
<div class="a" style="left:30px;top:572px;width:1px;height:58px;background:#2f2f2f;"></div>
<div class="a" style="left:31px;top:572px;width:21px;height:58px;background:#424242;"></div>
<div class="a" style="left:31px;top:629px;width:21px;height:1.5px;background:#373737;"></div>
<div class="a" style="left:52px;top:572px;width:991px;height:58px;background:#dcdcdc;"></div>
<div class="a" style="left:52px;top:629px;width:991px;height:2px;background:#616161;"></div>
<div class="a" style="left:264px;top:572px;width:1.5px;height:58px;background:#444;"></div>
<svg class="a" style="left:59px;top:586px;" width="19" height="18" viewBox="0 0 19 18"><path d="M9.3 1.8V17.2M1.5 4.6L17 13.3M1.5 13.3L17 4.6" stroke="#000" stroke-width="3.4" stroke-linecap="round"/></svg>
<div class="t" style="right:946.48px;top:590.8px;font-size:20px;color:#333;">2</div>
<div class="t" style="right:821.54px;top:590.7px;font-size:20.5px;color:#000;font-weight:bold;transform:scaleX(0.9501);transform-origin:right top;-webkit-text-stroke:0.35px #000;">10:00:33</div>
<div class="t" style="left:270.00px;top:578.6px;font-size:21px;color:#000;font-weight:bold;transform:scaleX(1.1030);transform-origin:left top;-webkit-text-stroke:0.35px #000;">201101</div>
<div class="t" style="left:270.00px;top:606.6px;font-size:21px;color:#000;font-weight:bold;transform:scaleX(0.9808);transform-origin:left top;-webkit-text-stroke:0.35px #000;">201101_10</div>
<div class="t" style="right:42.49px;top:590.7px;font-size:20.5px;color:#000;font-weight:bold;transform:scaleX(0.6678);transform-origin:right top;-webkit-text-stroke:0.8px #000;">??:??</div>
<svg class="a" style="left:31px;top:590px;" width="22" height="22" viewBox="0 0 22 22"><circle cx="10" cy="11" r="9" fill="#3a6ae0" stroke="#a8d890" stroke-width="2"/><text x="6.5" y="15.5" font-size="12" fill="#fff" font-family="Liberation Serif" font-weight="bold">1</text></svg>
<div class="a" style="left:5px;top:630px;width:25px;height:57px;background:#393939;"></div>
<div class="a" style="left:30px;top:630px;width:1px;height:57px;background:#2f2f2f;"></div>
<div class="a" style="left:31px;top:630px;width:21px;height:57px;background:#424242;"></div>
<div class="a" style="left:31px;top:686px;width:21px;height:1.5px;background:#373737;"></div>
<div class="a" style="left:52px;top:630px;width:991px;height:57px;background:#dcdcdc;"></div>
<div class="a" style="left:52px;top:686px;width:991px;height:2px;background:#616161;"></div>
<div class="a" style="left:264px;top:630px;width:1.5px;height:57px;background:#444;"></div>
<svg class="a" style="left:59px;top:644px;" width="19" height="18" viewBox="0 0 19 18"><path d="M9.3 1.8V17.2M1.5 4.6L17 13.3M1.5 13.3L17 4.6" stroke="#000" stroke-width="3.4" stroke-linecap="round"/></svg>
<div class="t" style="right:946.48px;top:648.8px;font-size:20px;color:#333;">3</div>
<div class="t" style="right:821.54px;top:648.7px;font-size:20.5px;color:#000;font-weight:bold;transform:scaleX(0.9501);transform-origin:right top;-webkit-text-stroke:0.35px #000;">10:01:56</div>
<div class="t" style="left:270.00px;top:636.6px;font-size:21px;color:#000;font-weight:bold;transform:scaleX(0.9626);transform-origin:left top;-webkit-text-stroke:0.35px #000;">RICK ASTLEY</div>
<div class="t" style="left:270.00px;top:664.6px;font-size:21px;color:#000;font-weight:bold;transform:scaleX(0.8945);transform-origin:left top;-webkit-text-stroke:0.35px #000;">TOGETHER FOREVER</div>
<div class="t" style="left:893.00px;top:648.8px;font-size:20px;color:#2a2a2a;transform:scaleX(1.0337);transform-origin:left top;">1988</div>
<div class="t" style="right:42.47px;top:648.7px;font-size:20.5px;color:#000;font-weight:bold;-webkit-text-stroke:0.35px #000;">3:19</div>
<svg class="a" style="left:31px;top:648px;" width="18" height="24" viewBox="0 0 18 24"><path d="M7.6 1 V17" stroke="#5566cc" stroke-width="1.6"/><path d="M7.6 1 L15.5 9.5" stroke="#8f9ae0" stroke-width="2.4" stroke-linecap="round"/><ellipse cx="4.8" cy="18" rx="4.3" ry="3.9" fill="#2f5fdc"/><ellipse cx="5.5" cy="19.5" rx="2.6" ry="1.6" fill="#5f9cf0"/></svg>
<div class="a" style="left:5px;top:687px;width:25px;height:58px;background:#393939;"></div>
<div class="a" style="left:30px;top:687px;width:1px;height:58px;background:#2f2f2f;"></div>
<div class="a" style="left:31px;top:687px;width:21px;height:58px;background:#424242;"></div>
<div class="a" style="left:52px;top:687px;width:991px;height:58px;background:#33cc33;"></div>
<div class="a" style="left:264px;top:687px;width:1.5px;height:58px;background:rgba(0,0,0,0.55);"></div>
<div class="t" style="left:61.00px;top:698.4px;font-size:37.5px;color:#000;font-weight:bold;transform:scaleX(0.7011);transform-origin:left top;-webkit-text-stroke:2px #000;">B</div>
<div class="t" style="right:946.48px;top:705.8px;font-size:20px;color:#333;">4</div>
<div class="t" style="right:821.47px;top:705.7px;font-size:20.5px;color:#000;font-weight:bold;transform:scaleX(0.9642);transform-origin:right top;-webkit-text-stroke:0.35px #000;">10:11:34</div>
<div class="t" style="left:270.00px;top:693.6px;font-size:21px;color:#000;font-weight:bold;transform:scaleX(1.0186);transform-origin:left top;-webkit-text-stroke:0.35px #000;">DIMITRI VEGAS &amp; LIKE MIKE &amp; REGARD</div>
<div class="t" style="left:270.00px;top:721.6px;font-size:21px;color:#000;font-weight:bold;transform:scaleX(0.9897);transform-origin:left top;-webkit-text-stroke:0.35px #000;">SAY MY NAME</div>
<div class="t" style="left:893.00px;top:705.8px;font-size:20px;color:#2a2a2a;transform:scaleX(1.0337);transform-origin:left top;">2020</div>
<div class="t" style="right:42.47px;top:705.7px;font-size:20.5px;color:#000;font-weight:bold;-webkit-text-stroke:0.35px #000;">2:40</div>
<svg class="a" style="left:31px;top:715px;" width="18" height="24" viewBox="0 0 18 24"><path d="M7.6 1 V17" stroke="#5566cc" stroke-width="1.6"/><path d="M7.6 1 L15.5 9.5" stroke="#8f9ae0" stroke-width="2.4" stroke-linecap="round"/><ellipse cx="4.8" cy="18" rx="4.3" ry="3.9" fill="#2f5fdc"/><ellipse cx="5.5" cy="19.5" rx="2.6" ry="1.6" fill="#5f9cf0"/></svg>
<div class="a" style="left:52px;top:745px;width:991px;height:19px;background:#33cc33;"></div>
<div class="a" style="left:52px;top:745px;width:639px;height:18px;background:#dcdcdc;"></div>
<div class="a" style="left:52px;top:763px;width:991px;height:2px;background:#616161;"></div>
<div class="a" style="left:5px;top:745px;width:25px;height:19px;background:#393939;"></div>
<div class="a" style="left:30px;top:745px;width:1px;height:19px;background:#2f2f2f;"></div>
<div class="a" style="left:31px;top:745px;width:21px;height:19px;background:#424242;"></div>
<div class="a" style="left:31px;top:763px;width:21px;height:1.5px;background:#373737;"></div>
<div class="t" style="left:92.00px;top:746.7px;font-size:14.5px;color:#333;transform:scaleX(0.9309);transform-origin:left top;">CURRENT</div>
<div class="a" style="left:5px;top:764px;width:25px;height:57px;background:#393939;"></div>
<div class="a" style="left:30px;top:764px;width:1px;height:57px;background:#2f2f2f;"></div>
<div class="a" style="left:31px;top:764px;width:21px;height:57px;background:#424242;"></div>
<div class="a" style="left:31px;top:820px;width:21px;height:1.5px;background:#373737;"></div>
<div class="a" style="left:52px;top:764px;width:991px;height:57px;background:#dcdcdc;"></div>
<div class="a" style="left:52px;top:820px;width:991px;height:2px;background:#616161;"></div>
<div class="a" style="left:264px;top:764px;width:1.5px;height:57px;background:#444;"></div>
<svg class="a" style="left:59px;top:778px;" width="19" height="18" viewBox="0 0 19 18"><path d="M9.3 1.8V17.2M1.5 4.6L17 13.3M1.5 13.3L17 4.6" stroke="#000" stroke-width="3.4" stroke-linecap="round"/></svg>
<div class="t" style="right:946.48px;top:782.8px;font-size:20px;color:#333;">5</div>
<div class="t" style="right:821.54px;top:782.7px;font-size:20.5px;color:#000;font-weight:bold;transform:scaleX(0.9501);transform-origin:right top;-webkit-text-stroke:0.35px #000;">10:05:15</div>
<div class="t" style="left:270.00px;top:770.6px;font-size:21px;color:#000;font-weight:bold;transform:scaleX(1.0337);transform-origin:left top;-webkit-text-stroke:0.35px #000;">ATR</div>
<div class="t" style="left:270.00px;top:798.6px;font-size:21px;color:#000;font-weight:bold;transform:scaleX(0.9251);transform-origin:left top;-webkit-text-stroke:0.35px #000;">THIS IS ATR, ALL TIME, KIND YOU LIKE_LASER1</div>
<div class="t" style="left:893.00px;top:782.8px;font-size:20px;color:#2a2a2a;transform:scaleX(1.0337);transform-origin:left top;">2020</div>
<div class="t" style="right:42.47px;top:782.7px;font-size:20.5px;color:#000;font-weight:bold;-webkit-text-stroke:0.35px #000;">0:06</div>
<svg class="a" style="left:30px;top:782px;" width="22" height="22" viewBox="0 0 22 22"><path d="M11 1 L14 8 L21 8.5 L15.5 13 L17.5 20.5 L11 16.5 L4.5 20.5 L6.5 13 L1 8.5 L8 8z" fill="#f8c818" stroke="#a87800" stroke-width="0.8"/></svg>
<div class="a" style="left:5px;top:821px;width:25px;height:58px;background:#393939;"></div>
<div class="a" style="left:30px;top:821px;width:1px;height:58px;background:#2f2f2f;"></div>
<div class="a" style="left:31px;top:821px;width:21px;height:58px;background:#424242;"></div>
<div class="a" style="left:31px;top:878px;width:21px;height:1.5px;background:#373737;"></div>
<div class="a" style="left:52px;top:821px;width:991px;height:58px;background:#dcdcdc;"></div>
<div class="a" style="left:52px;top:878px;width:991px;height:2px;background:#616161;"></div>
<div class="a" style="left:264px;top:821px;width:1.5px;height:58px;background:#444;"></div>
<svg class="a" style="left:59px;top:835px;" width="19" height="18" viewBox="0 0 19 18"><path d="M9.3 1.8V17.2M1.5 4.6L17 13.3M1.5 13.3L17 4.6" stroke="#000" stroke-width="3.4" stroke-linecap="round"/></svg>
<div class="t" style="right:946.48px;top:839.8px;font-size:20px;color:#333;">6</div>
<div class="t" style="right:821.54px;top:839.7px;font-size:20.5px;color:#000;font-weight:bold;transform:scaleX(0.9501);transform-origin:right top;-webkit-text-stroke:0.35px #000;">10:05:21</div>
<div class="t" style="left:270.00px;top:827.6px;font-size:21px;color:#000;font-weight:bold;transform:scaleX(1.0379);transform-origin:left top;-webkit-text-stroke:0.35px #000;">DANA</div>
<div class="t" style="left:270.00px;top:855.6px;font-size:21px;color:#000;font-weight:bold;transform:scaleX(0.9186);transform-origin:left top;-webkit-text-stroke:0.35px #000;">FAIRYTALE</div>
<div class="t" style="left:893.00px;top:839.8px;font-size:20px;color:#2a2a2a;transform:scaleX(1.0337);transform-origin:left top;">1977</div>
<div class="t" style="right:42.47px;top:839.7px;font-size:20.5px;color:#000;font-weight:bold;-webkit-text-stroke:0.35px #000;">3:01</div>
<svg class="a" style="left:31px;top:840px;" width="18" height="24" viewBox="0 0 18 24"><path d="M7.6 1 V17" stroke="#5566cc" stroke-width="1.6"/><path d="M7.6 1 L15.5 9.5" stroke="#8f9ae0" stroke-width="2.4" stroke-linecap="round"/><ellipse cx="4.8" cy="18" rx="4.3" ry="3.9" fill="#2f5fdc"/><ellipse cx="5.5" cy="19.5" rx="2.6" ry="1.6" fill="#5f9cf0"/></svg>
<div class="a" style="left:5px;top:879px;width:25px;height:57px;background:#393939;"></div>
<div class="a" style="left:30px;top:879px;width:1px;height:57px;background:#2f2f2f;"></div>
<div class="a" style="left:31px;top:879px;width:21px;height:57px;background:#424242;"></div>
<div class="a" style="left:31px;top:935px;width:21px;height:1.5px;background:#373737;"></div>
<div class="a" style="left:52px;top:879px;width:991px;height:57px;background:#dcdcdc;"></div>
<div class="a" style="left:52px;top:935px;width:991px;height:2px;background:#616161;"></div>
<div class="a" style="left:264px;top:879px;width:1.5px;height:57px;background:#444;"></div>
<svg class="a" style="left:59px;top:893px;" width="19" height="18" viewBox="0 0 19 18"><path d="M9.3 1.8V17.2M1.5 4.6L17 13.3M1.5 13.3L17 4.6" stroke="#000" stroke-width="3.4" stroke-linecap="round"/></svg>
<div class="t" style="right:946.48px;top:897.8px;font-size:20px;color:#333;">7</div>
<div class="t" style="right:821.54px;top:897.7px;font-size:20.5px;color:#000;font-weight:bold;transform:scaleX(0.9501);transform-origin:right top;-webkit-text-stroke:0.35px #000;">10:08:22</div>
<div class="t" style="left:270.00px;top:885.6px;font-size:21px;color:#000;font-weight:bold;transform:scaleX(0.9835);transform-origin:left top;-webkit-text-stroke:0.35px #000;">RUPERT HOLMES</div>
<div class="t" style="left:270.00px;top:913.6px;font-size:21px;color:#000;font-weight:bold;transform:scaleX(0.9775);transform-origin:left top;-webkit-text-stroke:0.35px #000;">I DON'T NEED YOU</div>
<div class="t" style="right:42.47px;top:897.7px;font-size:20.5px;color:#000;font-weight:bold;-webkit-text-stroke:0.35px #000;">3:12</div>
<svg class="a" style="left:31px;top:898px;" width="18" height="24" viewBox="0 0 18 24"><path d="M7.6 1 V17" stroke="#5566cc" stroke-width="1.6"/><path d="M7.6 1 L15.5 9.5" stroke="#8f9ae0" stroke-width="2.4" stroke-linecap="round"/><ellipse cx="4.8" cy="18" rx="4.3" ry="3.9" fill="#2f5fdc"/><ellipse cx="5.5" cy="19.5" rx="2.6" ry="1.6" fill="#5f9cf0"/></svg>
<div class="a" style="left:5px;top:936px;width:25px;height:58px;background:#393939;"></div>
<div class="a" style="left:30px;top:936px;width:1px;height:58px;background:#2f2f2f;"></div>
<div class="a" style="left:31px;top:936px;width:21px;height:58px;background:#424242;"></div>
<div class="a" style="left:52px;top:936px;width:991px;height:58px;background:#33cc33;"></div>
<div class="a" style="left:264px;top:936px;width:1.5px;height:58px;background:rgba(0,0,0,0.55);"></div>
<div class="t" style="left:61.00px;top:947.4px;font-size:37.5px;color:#000;font-weight:bold;transform:scaleX(0.7011);transform-origin:left top;-webkit-text-stroke:2px #000;">B</div>
<div class="t" style="right:946.48px;top:954.8px;font-size:20px;color:#333;">8</div>
<div class="t" style="right:821.47px;top:954.7px;font-size:20.5px;color:#000;font-weight:bold;transform:scaleX(0.9642);transform-origin:right top;-webkit-text-stroke:0.35px #000;">10:11:34</div>
<div class="t" style="left:270.00px;top:942.6px;font-size:21px;color:#000;font-weight:bold;transform:scaleX(0.9082);transform-origin:left top;-webkit-text-stroke:0.35px #000;">FREEJAK</div>
<div class="t" style="left:270.00px;top:970.6px;font-size:21px;color:#000;font-weight:bold;transform:scaleX(0.9187);transform-origin:left top;-webkit-text-stroke:0.35px #000;">I'M FOR REAL</div>
<div class="t" style="left:893.00px;top:954.8px;font-size:20px;color:#2a2a2a;transform:scaleX(1.0337);transform-origin:left top;">2020</div>
<div class="t" style="right:42.47px;top:954.7px;font-size:20.5px;color:#000;font-weight:bold;-webkit-text-stroke:0.35px #000;">2:37</div>
<svg class="a" style="left:33px;top:965px;" width="18" height="18" viewBox="0 0 18 18"><path d="M1 0 L17 9 L1 18z" fill="#7ac870"/></svg>
<div class="a" style="left:52px;top:994px;width:991px;height:19px;background:#33cc33;"></div>
<div class="a" style="left:52px;top:994px;width:729px;height:18px;background:#dcdcdc;"></div>
<div class="a" style="left:52px;top:1012px;width:991px;height:2px;background:#616161;"></div>
<div class="a" style="left:5px;top:994px;width:25px;height:19px;background:#393939;"></div>
<div class="a" style="left:30px;top:994px;width:1px;height:19px;background:#2f2f2f;"></div>
<div class="a" style="left:31px;top:994px;width:21px;height:19px;background:#424242;"></div>
<div class="a" style="left:31px;top:1012px;width:21px;height:1.5px;background:#373737;"></div>
<div class="t" style="left:92.00px;top:995.7px;font-size:14.5px;color:#333;transform:scaleX(0.9309);transform-origin:left top;">CURRENT</div>
<div class="t" style="left:170.00px;top:995.7px;font-size:14.5px;color:#333;transform:scaleX(1.0032);transform-origin:left top;">PLAYING</div>
<div class="a" style="left:5px;top:1013px;width:25px;height:57px;background:#393939;"></div>
<div class="a" style="left:30px;top:1013px;width:1px;height:57px;background:#2f2f2f;"></div>
<div class="a" style="left:31px;top:1013px;width:21px;height:57px;background:#424242;"></div>
<div class="a" style="left:31px;top:1069px;width:21px;height:1.5px;background:#373737;"></div>
<div class="a" style="left:52px;top:1013px;width:991px;height:57px;background:#6495ed;"></div>
<div class="a" style="left:52px;top:1069px;width:991px;height:2px;background:#333;"></div>
<div class="a" style="left:264px;top:1013px;width:1.5px;height:57px;background:rgba(0,0,0,0.55);"></div>
<div class="t" style="left:59.30px;top:1024.4px;font-size:37.5px;color:#000;font-weight:bold;transform:scaleX(0.7491);transform-origin:left top;-webkit-text-stroke:2px #000;">C</div>
<div class="t" style="right:946.48px;top:1031.8px;font-size:20px;color:#333;">9</div>
<div class="t" style="right:821.54px;top:1031.7px;font-size:20.5px;color:#000;font-weight:bold;transform:scaleX(0.9501);transform-origin:right top;-webkit-text-stroke:0.35px #000;">10:16:45</div>
<div class="t" style="left:270.00px;top:1019.6px;font-size:21px;color:#000;font-weight:bold;transform:scaleX(0.9965);transform-origin:left top;-webkit-text-stroke:0.35px #000;">BILLY IDOL</div>
<div class="t" style="left:270.00px;top:1047.6px;font-size:21px;color:#000;font-weight:bold;transform:scaleX(0.9496);transform-origin:left top;-webkit-text-stroke:0.35px #000;">HOT IN THE CITY</div>
<div class="t" style="left:893.00px;top:1031.8px;font-size:20px;color:#2a2a2a;transform:scaleX(1.0337);transform-origin:left top;">1982</div>
<div class="t" style="right:42.47px;top:1031.7px;font-size:20.5px;color:#000;font-weight:bold;-webkit-text-stroke:0.35px #000;">3:24</div>
<div class="a" style="left:31px;top:1013px;width:21px;height:57px;background:#4e4e4e;"></div>
<div class="a" style="left:34px;top:1034px;width:5px;height:16px;background:#ee6262;"></div>
<div class="a" style="left:44px;top:1034px;width:5.5px;height:16px;background:#ee6262;"></div>
<svg class="a" style="left:14px;top:1038px;" width="6" height="8" viewBox="0 0 6 8"><path d="M0 0 L5 4 L0 8z" fill="#ddd"/></svg>
<div class="a" style="left:5px;top:1070px;width:25px;height:58px;background:#393939;"></div>
<div class="a" style="left:30px;top:1070px;width:1px;height:58px;background:#2f2f2f;"></div>
<div class="a" style="left:31px;top:1070px;width:21px;height:58px;background:#424242;"></div>
<div class="a" style="left:31px;top:1127px;width:21px;height:1.5px;background:#373737;"></div>
<div class="a" style="left:52px;top:1070px;width:991px;height:58px;background:#ffd700;"></div>
<div class="a" style="left:52px;top:1127px;width:991px;height:2px;background:#333;"></div>
<div class="a" style="left:264px;top:1070px;width:1.5px;height:58px;background:rgba(0,0,0,0.55);"></div>
<div class="t" style="left:59.70px;top:1081.4px;font-size:37.5px;color:#000;font-weight:bold;transform:scaleX(0.7934);transform-origin:left top;-webkit-text-stroke:2px #000;">D</div>
<div class="t" style="right:944.95px;top:1088.8px;font-size:20px;color:#333;">10</div>
<div class="t" style="right:821.54px;top:1088.7px;font-size:20.5px;color:#000;font-weight:bold;transform:scaleX(0.9501);transform-origin:right top;-webkit-text-stroke:0.35px #000;">10:20:09</div>
<div class="t" style="left:270.00px;top:1076.6px;font-size:21px;color:#000;font-weight:bold;transform:scaleX(1.0337);transform-origin:left top;-webkit-text-stroke:0.35px #000;">ATR</div>
<div class="t" style="left:270.00px;top:1104.6px;font-size:21px;color:#000;font-weight:bold;transform:scaleX(0.9367);transform-origin:left top;-webkit-text-stroke:0.35px #000;">THIS IS ATR, ALL TIME, KIND YOU LIKE_1</div>
<div class="t" style="left:893.00px;top:1088.8px;font-size:20px;color:#2a2a2a;transform:scaleX(1.0337);transform-origin:left top;">2020</div>
<div class="t" style="right:42.47px;top:1088.7px;font-size:20.5px;color:#000;font-weight:bold;-webkit-text-stroke:0.35px #000;">0:07</div>
<div class="a" style="left:34px;top:1092px;width:5px;height:16px;background:#ee6262;"></div>
<div class="a" style="left:44px;top:1092px;width:5.5px;height:16px;background:#ee6262;"></div>
<div class="a" style="left:5px;top:1128px;width:25px;height:57px;background:#393939;"></div>
<div class="a" style="left:30px;top:1128px;width:1px;height:57px;background:#2f2f2f;"></div>
<div class="a" style="left:31px;top:1128px;width:21px;height:57px;background:#424242;"></div>
<div class="a" style="left:31px;top:1184px;width:21px;height:1.5px;background:#373737;"></div>
<div class="a" style="left:52px;top:1128px;width:991px;height:57px;background:#ff6347;"></div>
<div class="a" style="left:52px;top:1184px;width:991px;height:2px;background:#333;"></div>
<div class="a" style="left:264px;top:1128px;width:1.5px;height:57px;background:rgba(0,0,0,0.55);"></div>
<div class="t" style="left:58.50px;top:1139.4px;font-size:37.5px;color:#000;font-weight:bold;transform:scaleX(0.7934);transform-origin:left top;-webkit-text-stroke:2px #000;">A</div>
<div class="t" style="right:945.04px;top:1146.8px;font-size:20px;color:#333;">11</div>
<div class="t" style="right:821.54px;top:1146.7px;font-size:20.5px;color:#000;font-weight:bold;transform:scaleX(0.9501);transform-origin:right top;-webkit-text-stroke:0.35px #000;">10:20:16</div>
<div class="t" style="left:270.00px;top:1134.6px;font-size:21px;color:#000;font-weight:bold;transform:scaleX(0.9966);transform-origin:left top;-webkit-text-stroke:0.35px #000;">WILSON BROTHERS</div>
<div class="t" style="left:270.00px;top:1162.6px;font-size:21px;color:#000;font-weight:bold;transform:scaleX(0.9600);transform-origin:left top;-webkit-text-stroke:0.35px #000;">ANOTHER NIGHT</div>
<div class="t" style="left:893.00px;top:1146.8px;font-size:20px;color:#2a2a2a;transform:scaleX(1.0337);transform-origin:left top;">1979</div>
<div class="t" style="right:42.47px;top:1146.7px;font-size:20.5px;color:#000;font-weight:bold;-webkit-text-stroke:0.35px #000;">3:53</div>
<div class="a" style="left:34px;top:1150px;width:5px;height:16px;background:#ee6262;"></div>
<div class="a" style="left:44px;top:1150px;width:5.5px;height:16px;background:#ee6262;"></div>
<div class="a" style="left:5px;top:1185px;width:25px;height:58px;background:#393939;"></div>
<div class="a" style="left:30px;top:1185px;width:1px;height:58px;background:#2f2f2f;"></div>
<div class="a" style="left:31px;top:1185px;width:21px;height:58px;background:#424242;"></div>
<div class="a" style="left:31px;top:1242px;width:21px;height:1.5px;background:#373737;"></div>
<div class="a" style="left:31px;top:1185px;width:1012px;height:58px;background:#424242;"></div>
<div class="a" style="left:31px;top:1242px;width:1012px;height:1.5px;background:#393939;"></div>
<div class="a" style="left:264px;top:1185px;width:1px;height:58px;background:#383838;"></div>
<div class="t" style="right:944.95px;top:1203.8px;font-size:20px;color:#b0b0b0;">12</div>
<div class="t" style="right:821.54px;top:1203.7px;font-size:20.5px;color:#bdbdbd;font-weight:bold;transform:scaleX(0.9501);transform-origin:right top;-webkit-text-stroke:0.35px #bdbdbd;">10:24:09</div>
<div class="t" style="left:270.00px;top:1191.6px;font-size:21px;color:#bdbdbd;font-weight:bold;transform:scaleX(1.0090);transform-origin:left top;-webkit-text-stroke:0.35px #bdbdbd;">TENACIOUS D</div>
<div class="t" style="left:270.00px;top:1219.6px;font-size:21px;color:#bdbdbd;font-weight:bold;transform:scaleX(0.9121);transform-origin:left top;-webkit-text-stroke:0.35px #bdbdbd;">TRIBUTE</div>
<div class="t" style="left:893.00px;top:1203.8px;font-size:20px;color:#b0b0b0;transform:scaleX(1.0337);transform-origin:left top;">2003</div>
<div class="t" style="right:42.47px;top:1203.7px;font-size:20.5px;color:#bdbdbd;font-weight:bold;-webkit-text-stroke:0.35px #bdbdbd;">4:08</div>
<svg class="a" style="left:31px;top:1204px;" width="18" height="24" viewBox="0 0 18 24"><path d="M7.6 1 V17" stroke="#5566cc" stroke-width="1.6"/><path d="M7.6 1 L15.5 9.5" stroke="#8f9ae0" stroke-width="2.4" stroke-linecap="round"/><ellipse cx="4.8" cy="18" rx="4.3" ry="3.9" fill="#2f5fdc"/><ellipse cx="5.5" cy="19.5" rx="2.6" ry="1.6" fill="#5f9cf0"/></svg>
<div class="a" style="left:5px;top:1243px;width:25px;height:57px;background:#393939;"></div>
<div class="a" style="left:30px;top:1243px;width:1px;height:57px;background:#2f2f2f;"></div>
<div class="a" style="left:31px;top:1243px;width:21px;height:57px;background:#424242;"></div>
<div class="a" style="left:31px;top:1299px;width:21px;height:1.5px;background:#373737;"></div>
<div class="a" style="left:31px;top:1243px;width:1012px;height:57px;background:#424242;"></div>
<div class="a" style="left:31px;top:1299px;width:1012px;height:1.5px;background:#393939;"></div>
<div class="a" style="left:264px;top:1243px;width:1px;height:57px;background:#383838;"></div>
<div class="t" style="right:944.95px;top:1261.8px;font-size:20px;color:#b0b0b0;">13</div>
<div class="t" style="right:821.54px;top:1261.7px;font-size:20.5px;color:#bdbdbd;font-weight:bold;transform:scaleX(0.9501);transform-origin:right top;-webkit-text-stroke:0.35px #bdbdbd;">10:28:17</div>
<div class="t" style="left:270.00px;top:1249.6px;font-size:21px;color:#bdbdbd;font-weight:bold;transform:scaleX(1.0337);transform-origin:left top;-webkit-text-stroke:0.35px #bdbdbd;">ATR</div>
<div class="t" style="left:270.00px;top:1277.6px;font-size:21px;color:#bdbdbd;font-weight:bold;transform:scaleX(0.9510);transform-origin:left top;-webkit-text-stroke:0.35px #bdbdbd;">THIS IS ATR, THE NEW MUSIC STATION THAT ROCKS_IZZY</div>
<div class="t" style="left:893.00px;top:1261.8px;font-size:20px;color:#b0b0b0;transform:scaleX(1.0337);transform-origin:left top;">2020</div>
<div class="t" style="right:42.47px;top:1261.7px;font-size:20.5px;color:#bdbdbd;font-weight:bold;-webkit-text-stroke:0.35px #bdbdbd;">0:05</div>
<svg class="a" style="left:30px;top:1262px;" width="22" height="22" viewBox="0 0 22 22"><path d="M11 1 L14 8 L21 8.5 L15.5 13 L17.5 20.5 L11 16.5 L4.5 20.5 L6.5 13 L1 8.5 L8 8z" fill="#f8c818" stroke="#a87800" stroke-width="0.8"/></svg>
<div class="a" style="left:5px;top:1300px;width:25px;height:58px;background:#393939;"></div>
<div class="a" style="left:30px;top:1300px;width:1px;height:58px;background:#2f2f2f;"></div>
<div class="a" style="left:31px;top:1300px;width:21px;height:58px;background:#424242;"></div>
<div class="a" style="left:31px;top:1357px;width:21px;height:1.5px;background:#373737;"></div>
<div class="a" style="left:31px;top:1300px;width:1012px;height:58px;background:#424242;"></div>
<div class="a" style="left:31px;top:1357px;width:1012px;height:1.5px;background:#393939;"></div>
<div class="a" style="left:264px;top:1300px;width:1px;height:58px;background:#383838;"></div>
<div class="t" style="right:944.95px;top:1318.8px;font-size:20px;color:#b0b0b0;">14</div>
<div class="t" style="right:821.54px;top:1318.7px;font-size:20.5px;color:#bdbdbd;font-weight:bold;transform:scaleX(0.9501);transform-origin:right top;-webkit-text-stroke:0.35px #bdbdbd;">10:28:22</div>
<div class="t" style="left:270.00px;top:1306.6px;font-size:21px;color:#bdbdbd;font-weight:bold;transform:scaleX(0.9038);transform-origin:left top;-webkit-text-stroke:0.35px #bdbdbd;">EAGLES</div>
<div class="t" style="left:270.00px;top:1334.6px;font-size:21px;color:#bdbdbd;font-weight:bold;transform:scaleX(0.8704);transform-origin:left top;-webkit-text-stroke:0.35px #bdbdbd;">LAST RESORT</div>
<div class="t" style="left:893.00px;top:1318.8px;font-size:20px;color:#b0b0b0;transform:scaleX(1.0337);transform-origin:left top;">1976</div>
<div class="t" style="right:42.47px;top:1318.7px;font-size:20.5px;color:#bdbdbd;font-weight:bold;-webkit-text-stroke:0.35px #bdbdbd;">7:08</div>
<svg class="a" style="left:31px;top:1319px;" width="18" height="24" viewBox="0 0 18 24"><path d="M7.6 1 V17" stroke="#5566cc" stroke-width="1.6"/><path d="M7.6 1 L15.5 9.5" stroke="#8f9ae0" stroke-width="2.4" stroke-linecap="round"/><ellipse cx="4.8" cy="18" rx="4.3" ry="3.9" fill="#2f5fdc"/><ellipse cx="5.5" cy="19.5" rx="2.6" ry="1.6" fill="#5f9cf0"/></svg>
<div class="a" style="left:5px;top:1358px;width:25px;height:57px;background:#393939;"></div>
<div class="a" style="left:30px;top:1358px;width:1px;height:57px;background:#2f2f2f;"></div>
<div class="a" style="left:31px;top:1358px;width:21px;height:57px;background:#424242;"></div>
<div class="a" style="left:31px;top:1414px;width:21px;height:1.5px;background:#373737;"></div>
<div class="a" style="left:31px;top:1358px;width:1012px;height:57px;background:#424242;"></div>
<div class="a" style="left:31px;top:1414px;width:1012px;height:1.5px;background:#393939;"></div>
<div class="a" style="left:264px;top:1358px;width:1px;height:57px;background:#383838;"></div>
<div class="t" style="right:944.95px;top:1376.8px;font-size:20px;color:#b0b0b0;">15</div>
<div class="t" style="right:821.54px;top:1376.7px;font-size:20.5px;color:#bdbdbd;font-weight:bold;transform:scaleX(0.9501);transform-origin:right top;-webkit-text-stroke:0.35px #bdbdbd;">10:30:00</div>
<div class="t" style="left:270.00px;top:1364.6px;font-size:21px;color:#bdbdbd;font-weight:bold;transform:scaleX(1.0140);transform-origin:left top;-webkit-text-stroke:0.35px #bdbdbd;">F1RSTMAN FT. DJ YOUSS_E &amp; ROEF</div>
<div class="a" style="left:0px;top:1377px;width:1080px;height:35px;background:#2c2c2c;"></div>
<div class="a" style="left:0px;top:1412px;width:1080px;height:13px;background:#151515;"></div>
<div class="a" style="left:0px;top:1377px;width:1080px;height:36px;background:linear-gradient(#2d2d2d 0,#2d2d2d 85%,#262626 100%);"></div>
<div class="a" style="left:0px;top:1413px;width:1080px;height:12px;background:#111111;"></div>
<div class="a" style="left:3px;top:1375px;width:1067px;height:3px;background:#050505;"></div>
<svg class="a" style="left:15px;top:1388px;" width="14" height="14" viewBox="0 0 14 14"><circle cx="7" cy="7" r="6" fill="#5a5a5a"/><circle cx="6" cy="6" r="3" fill="#777"/></svg>
<svg class="a" style="left:50px;top:1383px;" width="2" height="24" viewBox="0 0 2 24"><rect x="0" y="0" width="1.2" height="1.5" fill="#777"/><rect x="0" y="3" width="1.2" height="1.5" fill="#777"/><rect x="0" y="6" width="1.2" height="1.5" fill="#777"/><rect x="0" y="9" width="1.2" height="1.5" fill="#777"/><rect x="0" y="12" width="1.2" height="1.5" fill="#777"/><rect x="0" y="15" width="1.2" height="1.5" fill="#777"/><rect x="0" y="18" width="1.2" height="1.5" fill="#777"/><rect x="0" y="21" width="1.2" height="1.5" fill="#777"/></svg>
<svg class="a" style="left:146px;top:1383px;" width="2" height="24" viewBox="0 0 2 24"><rect x="0" y="0" width="1.2" height="1.5" fill="#777"/><rect x="0" y="3" width="1.2" height="1.5" fill="#777"/><rect x="0" y="6" width="1.2" height="1.5" fill="#777"/><rect x="0" y="9" width="1.2" height="1.5" fill="#777"/><rect x="0" y="12" width="1.2" height="1.5" fill="#777"/><rect x="0" y="15" width="1.2" height="1.5" fill="#777"/><rect x="0" y="18" width="1.2" height="1.5" fill="#777"/><rect x="0" y="21" width="1.2" height="1.5" fill="#777"/></svg>
<svg class="a" style="left:199px;top:1383px;" width="2" height="24" viewBox="0 0 2 24"><rect x="0" y="0" width="1.2" height="1.5" fill="#777"/><rect x="0" y="3" width="1.2" height="1.5" fill="#777"/><rect x="0" y="6" width="1.2" height="1.5" fill="#777"/><rect x="0" y="9" width="1.2" height="1.5" fill="#777"/><rect x="0" y="12" width="1.2" height="1.5" fill="#777"/><rect x="0" y="15" width="1.2" height="1.5" fill="#777"/><rect x="0" y="18" width="1.2" height="1.5" fill="#777"/><rect x="0" y="21" width="1.2" height="1.5" fill="#777"/></svg>
<svg class="a" style="left:369px;top:1383px;" width="2" height="24" viewBox="0 0 2 24"><rect x="0" y="0" width="1.2" height="1.5" fill="#777"/><rect x="0" y="3" width="1.2" height="1.5" fill="#777"/><rect x="0" y="6" width="1.2" height="1.5" fill="#777"/><rect x="0" y="9" width="1.2" height="1.5" fill="#777"/><rect x="0" y="12" width="1.2" height="1.5" fill="#777"/><rect x="0" y="15" width="1.2" height="1.5" fill="#777"/><rect x="0" y="18" width="1.2" height="1.5" fill="#777"/><rect x="0" y="21" width="1.2" height="1.5" fill="#777"/></svg>
<svg class="a" style="left:66px;top:1384px;" width="17" height="22" viewBox="0 0 17 22"><ellipse cx="8.5" cy="8" rx="7" ry="7.5" fill="#e8e8f0"/><rect x="5" y="14" width="7" height="6" fill="#c8c8d0"/></svg>
<svg class="a" style="left:108px;top:1384px;" width="17" height="22" viewBox="0 0 17 22"><circle cx="8.5" cy="6" r="4.5" fill="#f0c8a0"/><path d="M1 20 q0 -8 7.5 -8 q7.5 0 7.5 8z" fill="#3a6ad0"/><path d="M4 5 q4 -6 9 0" fill="#333"/></svg>
<svg class="a" style="left:161px;top:1387px;" width="22" height="17" viewBox="0 0 22 17"><rect x="0" y="0" width="13" height="4" fill="#f0f0f0"/><rect x="0" y="6" width="15" height="4" fill="#3a8ee0"/><rect x="0" y="12" width="13" height="4" fill="#f0f0f0"/><path d="M16 1l5 5M21 1l-5 5" stroke="#e05030" stroke-width="1.5"/><path d="M15 13l2 2l4 -4" stroke="#3cc03c" stroke-width="1.5" fill="none"/></svg>
<div class="a" style="left:205px;top:1381px;width:78px;height:28px;background:#232323;border-radius:14px"></div>
<div class="a" style="left:285px;top:1381px;width:78px;height:28px;background:#232323;border-radius:14px"></div>
<svg class="a" style="left:215px;top:1386px;" width="20" height="20" viewBox="0 0 20 20"><path d="M10 3 a7 7 0 1 1 -7 7" stroke="#3a7ad8" stroke-width="3.5" fill="none"/><path d="M4 1 l0 8 l7 -2z" fill="#3a7ad8"/></svg>
<div class="t" style="left:242.00px;top:1388.8px;font-size:14px;color:#c0c0c0;transform:scaleX(1.0417);transform-origin:left top;">Auto</div>
<svg class="a" style="left:296px;top:1388px;" width="21" height="16" viewBox="0 0 21 16"><path d="M10.5 0 L21 9 L0 9z" fill="#4a9ae8"/><rect x="0" y="11" width="21" height="4" fill="#4a9ae8"/></svg>
<div class="t" style="left:322.00px;top:1388.8px;font-size:14px;color:#c0c0c0;transform:scaleX(1.0417);transform-origin:left top;">Auto</div>
<div class="t" style="left:384.00px;top:1388.8px;font-size:14px;color:#c0c0c0;transform:scaleX(0.9769);transform-origin:left top;">Mark Played</div>
<div class="a" style="left:435px;top:1409px;width:42px;height:2px;background:#555;"></div>
<div class="t" style="left:481.00px;top:1388.8px;font-size:14px;color:#c0c0c0;transform:scaleX(1.0094);transform-origin:left top;">PlayerA TrackPause: Wilson Brothers - Another Night</div>
</body></html>
